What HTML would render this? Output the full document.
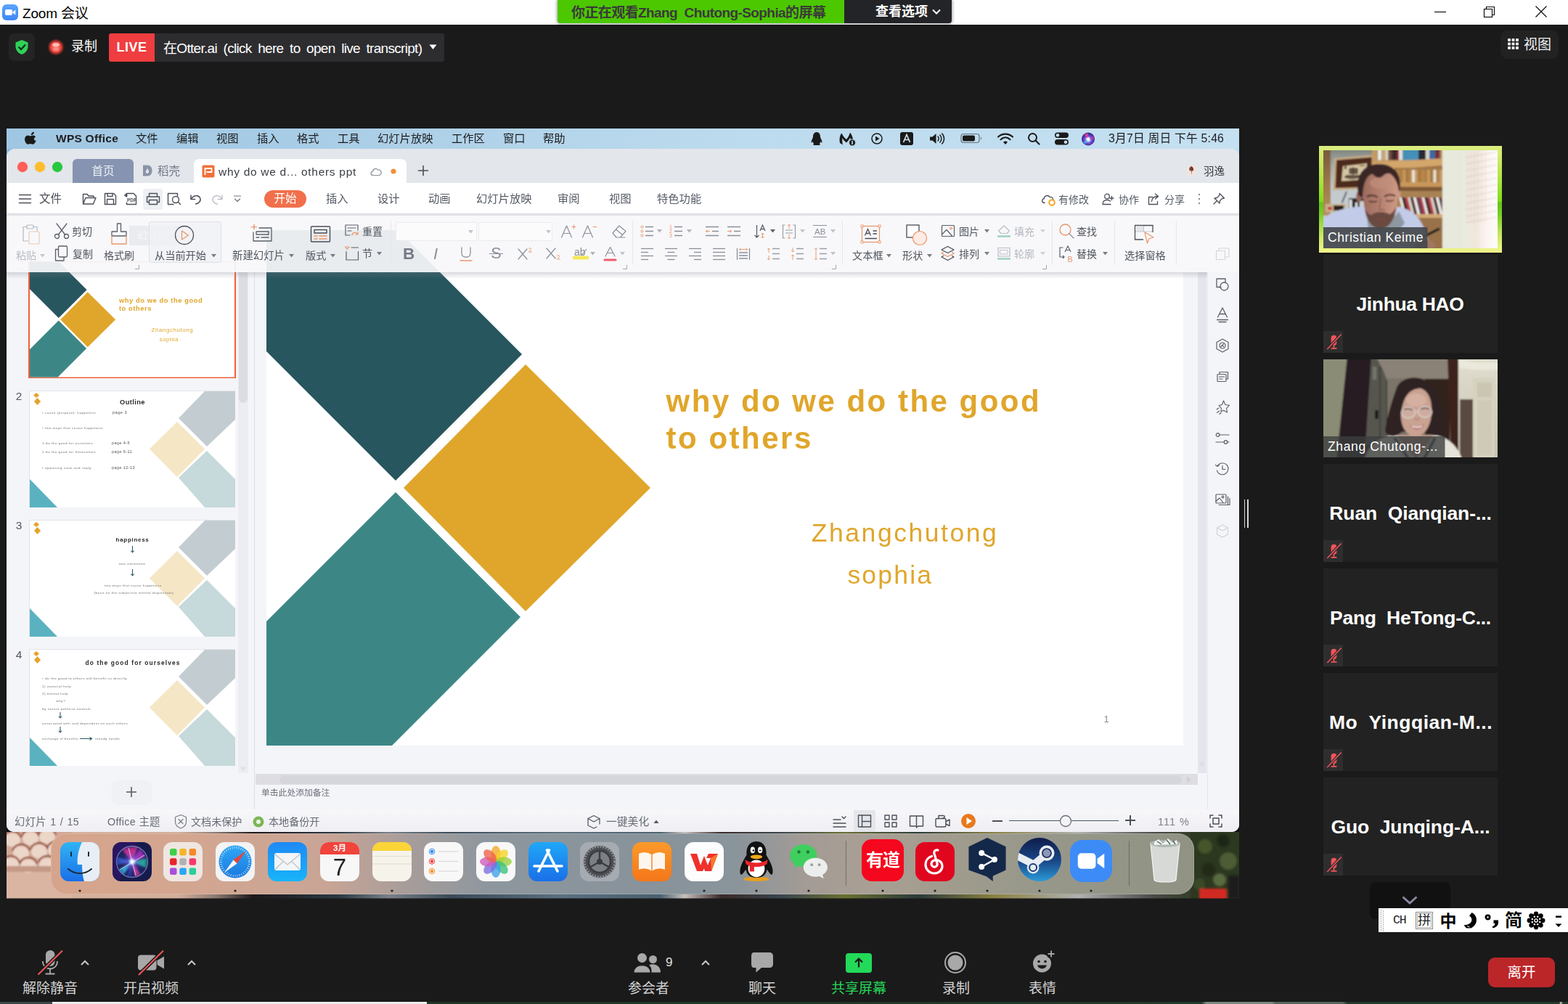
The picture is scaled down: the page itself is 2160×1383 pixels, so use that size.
<!DOCTYPE html><html><head><meta charset="utf-8"><title>Zoom</title><style>
html,body{margin:0;padding:0;}
body{width:2160px;height:1383px;overflow:hidden;background:#1a1a1a;font-family:"Liberation Sans","Noto Sans CJK SC",sans-serif;position:relative;}
.b{position:absolute;display:block;}
.t{position:absolute;white-space:pre;line-height:1;}
.bold{font-weight:700;}
</style></head><body><div class="b" style="left:0px;top:0px;width:2160px;height:34px;background:#ffffff;"></div><svg class="b" style="left:3px;top:6px;" width="22" height="22" viewBox="0 0 22 22"><defs><linearGradient id="zg" x1="0" y1="0" x2="0" y2="1"><stop offset="0" stop-color="#5ba4ff"/><stop offset="1" stop-color="#3f86f6"/></linearGradient></defs><rect x="0" y="0" width="22" height="22" rx="6" fill="url(#zg)"/><rect x="4" y="7" width="10" height="8" rx="2" fill="#fff"/><path d="M14.5 10.2 L18.3 7.6 V14.4 L14.5 11.8Z" fill="#fff"/></svg><div class="t " style="left:31px;top:17.5px;font-size:19px;color:#000;transform:translate(0,-50%);letter-spacing:-0.169px;">Zoom 会议</div><div class="b" style="left:766px;top:0px;width:547px;height:34px;background:rgba(0,0,0,0.25);border-radius:0 0 6px 6px;filter:blur(1.5px);"></div><div class="b" style="left:768px;top:0px;width:395px;height:32px;background:#4cc800;border-radius:0 0 0 4px;"></div><div class="b" style="left:1163px;top:0px;width:148px;height:32px;background:#232427;border-radius:0 0 4px 0;"></div><div class="t bold" style="left:787px;top:16.5px;font-size:19px;color:#3a3a3a;transform:translate(0,-50%);font-weight:700;letter-spacing:-0.586px;">你正在观看Zhang  Chutong-Sophia的屏幕</div><div class="t bold" style="left:1206px;top:16px;font-size:18px;color:#fff;transform:translate(0,-50%);font-weight:700;">查看选项</div><svg class="b" style="left:1283px;top:11px;" width="14" height="10" viewBox="0 0 14 10"><path d="M2 2.5 L7 7.5 L12 2.5" stroke="#fff" stroke-width="2" fill="none"/></svg><svg class="b" style="left:1970px;top:6px;" width="170" height="22" viewBox="0 0 170 22"><path d="M6 10.5 H22" stroke="#111" stroke-width="1.2"/><rect x="74.5" y="6.5" width="11" height="11" fill="none" stroke="#111" stroke-width="1.2"/><path d="M77.5 6.5 V3.5 H88.5 V14.5 H85.5" fill="none" stroke="#111" stroke-width="1.2"/><path d="M145.5 2.5 L160.5 17.5 M160.5 2.5 L145.5 17.5" stroke="#111" stroke-width="1.3"/></svg><div class="b" style="left:12px;top:46px;width:36px;height:38px;background:#242424;border-radius:8px;"></div><svg class="b" style="left:20px;top:54px;" width="20" height="22" viewBox="0 0 20 22"><path d="M10 1 L18.5 4.5 V10 C18.5 15.5 14.5 19.5 10 21 C5.500 19.5 1.500 15.500 1.500 10 V4.500Z" fill="#2fd158"/><path d="M5.500 10.500 L9 14 L15 7.500" stroke="#14301c" stroke-width="2.300" fill="none"/></svg><svg class="b" style="left:64px;top:52px;" width="26" height="26" viewBox="0 0 26 26"><defs><radialGradient id="rg"><stop offset="0" stop-color="#ff9a8a"/><stop offset="0.55" stop-color="#f0463c"/><stop offset="0.8" stop-color="#8a2a25" stop-opacity="0.7"/><stop offset="1" stop-color="#1a1a1a" stop-opacity="0"/></radialGradient></defs><circle cx="13" cy="13" r="12.500" fill="url(#rg)"/><ellipse cx="13" cy="9.500" rx="5" ry="2.500" fill="#ffd8d0" fill-opacity="0.75"/><ellipse cx="13" cy="16.500" rx="4.500" ry="2" fill="#ffc0b8" fill-opacity="0.35"/></svg><div class="t " style="left:98px;top:64px;font-size:18px;color:#fff;transform:translate(0,-50%);">录制</div><div class="b" style="left:150px;top:46px;width:63px;height:39px;background:#ef3d40;border-radius:3px 0 0 3px;"></div><div class="t " style="left:181.5px;top:65px;font-size:18px;color:#fff;transform:translate(-50%,-50%);font-weight:700;letter-spacing:0.5px;">LIVE</div><div class="b" style="left:213px;top:46px;width:399px;height:39px;background:#2d2d30;border-radius:0 3px 3px 0;"></div><div class="t " style="left:225px;top:65.5px;font-size:19px;color:#fff;transform:translate(0,-50%);letter-spacing:-0.696px;word-spacing:4px;">在Otter.ai (click here to open live transcript)</div><svg class="b" style="left:591px;top:61px;" width="11" height="8" viewBox="0 0 11 8"><path d="M0.500 0.500 H10.5 L5.500 7Z" fill="#fff"/></svg><div class="b" style="left:2067px;top:42px;width:80px;height:39px;background:#222222;border-radius:10px;"></div><svg class="b" style="left:2077px;top:53px;" width="16" height="16" viewBox="0 0 16 16"><rect x="0" y="0" width="4" height="4" rx="1" fill="#e8e8e8"/><rect x="0" y="5.5" width="4" height="4" rx="1" fill="#e8e8e8"/><rect x="0" y="11" width="4" height="4" rx="1" fill="#e8e8e8"/><rect x="5.5" y="0" width="4" height="4" rx="1" fill="#e8e8e8"/><rect x="5.5" y="5.5" width="4" height="4" rx="1" fill="#e8e8e8"/><rect x="5.5" y="11" width="4" height="4" rx="1" fill="#e8e8e8"/><rect x="11" y="0" width="4" height="4" rx="1" fill="#e8e8e8"/><rect x="11" y="5.5" width="4" height="4" rx="1" fill="#e8e8e8"/><rect x="11" y="11" width="4" height="4" rx="1" fill="#e8e8e8"/></svg><div class="t " style="left:2099px;top:60.5px;font-size:19px;color:#f0f0f0;transform:translate(0,-50%);">视图</div><div style="position:absolute;left:0;top:0;width:2160px;height:1383px;filter:blur(0.4px);clip-path:inset(177px 453px 145.500px 9px);"><div class="b" style="left:9px;top:177px;width:1698px;height:1060.5px;background:#111;"></div><div class="b" style="left:9px;top:177px;width:1698px;height:29px;background:linear-gradient(90deg,#9fc6e2 0%,#a9cde6 25%,#bddbee 60%,#c4e0f1 100%);"></div><svg class="b" style="left:34px;top:182px;" width="17" height="19" viewBox="0 0 17 19"><path d="M11.6 4.2c.8-1 1.300-2.200 1.200-3.500-1.100.1-2.500.8-3.300 1.800-.7.8-1.400 2.100-1.200 3.300 1.300.1 2.500-.6 3.300-1.600zM15.600 13.700c-.5 1.100-.7 1.600-1.300 2.500-.9 1.300-2.100 3-3.600 3-1.300 0-1.700-.9-3.500-.9s-2.200.9-3.500.9c-1.500 0-2.700-1.500-3.500-2.900C-2.200 12.500-.6 6.600 3.600 6.400c1.400 0 2.500 1 3.400 1 .8 0 2.400-1.200 4-1 .700 0 2.600.3 3.800 2.100-3.300 1.900-2.800 6.200.8 5.200z" fill="#1a1a1a" transform="translate(1,-1.500) scale(0.95)"/></svg><div class="t " style="left:77px;top:191px;font-size:15.5px;color:#1d1d1f;transform:translate(0,-50%);font-weight:700;letter-spacing:0.246px;">WPS Office</div><div class="t semi" style="left:187px;top:191px;font-size:15.3px;color:#1d1d1f;transform:translate(0,-50%);">文件</div><div class="t semi" style="left:243px;top:191px;font-size:15.3px;color:#1d1d1f;transform:translate(0,-50%);">编辑</div><div class="t semi" style="left:298px;top:191px;font-size:15.3px;color:#1d1d1f;transform:translate(0,-50%);">视图</div><div class="t semi" style="left:354px;top:191px;font-size:15.3px;color:#1d1d1f;transform:translate(0,-50%);">插入</div><div class="t semi" style="left:409px;top:191px;font-size:15.3px;color:#1d1d1f;transform:translate(0,-50%);">格式</div><div class="t semi" style="left:465px;top:191px;font-size:15.3px;color:#1d1d1f;transform:translate(0,-50%);">工具</div><div class="t semi" style="left:520px;top:191px;font-size:15.3px;color:#1d1d1f;transform:translate(0,-50%);">幻灯片放映</div><div class="t semi" style="left:622px;top:191px;font-size:15.3px;color:#1d1d1f;transform:translate(0,-50%);">工作区</div><div class="t semi" style="left:693px;top:191px;font-size:15.3px;color:#1d1d1f;transform:translate(0,-50%);">窗口</div><div class="t semi" style="left:748px;top:191px;font-size:15.3px;color:#1d1d1f;transform:translate(0,-50%);">帮助</div><svg class="b" style="left:1116px;top:181px;" width="18" height="20" viewBox="0 0 18 20"><path d="M9 1C5.500 1 4 4 4 7.500 C4 9 2 11.500 1.500 14.500 C1.300 16 2.500 15.500 3.500 14 C3.800 15.500 4.500 16.500 5.500 17.300 C4 17.800 3.500 19 5.500 19 H12.500 C14.500 19 14 17.800 12.500 17.300 C13.500 16.500 14.200 15.500 14.500 14 C15.500 15.500 16.700 16 16.500 14.500 C16 11.500 14 9 14 7.500 C14 4 12.500 1 9 1Z" fill="#1a1a1a"/></svg><svg class="b" style="left:1155px;top:181px;" width="26" height="21" viewBox="0 0 26 21"><path d="M2 16 C1 10 2 5 4.500 2.500 C6 6 8 9 11 11 C13.500 8 15 5 16 1.500 C19 5 20.500 10 20 15 L17 18 C17.500 14 17 10.500 16 8.500 C14.500 11.500 13 13.500 11 15.500 C8.500 13.500 6.500 11.500 5.500 9 C5 12 5.200 15 6 18.500Z" fill="#1a1a1a"/><circle cx="19" cy="15.500" r="4.500" fill="#1a1a1a" stroke="#b5d6eb" stroke-width="1"/><rect x="18.300" y="13" width="1.500" height="5" fill="#cfe4f2"/></svg><svg class="b" style="left:1199px;top:182px;" width="18" height="18" viewBox="0 0 18 18"><circle cx="9" cy="9" r="7" fill="none" stroke="#1a1a1a" stroke-width="1.500"/><path d="M7 5.500 L12.500 9 L7 12.500Z" fill="#1a1a1a"/></svg><svg class="b" style="left:1239px;top:181px;" width="20" height="20" viewBox="0 0 20 20"><rect x="1" y="1" width="18" height="18" rx="3" fill="#1a1a1a"/><path d="M5.500 15 L10 4.500 L14.500 15 M7.200 11.500 H12.800" stroke="#d5e8f4" stroke-width="1.600" fill="none"/></svg><svg class="b" style="left:1280px;top:181px;" width="26" height="20" viewBox="0 0 26 20"><path d="M1 7.500 H4.500 L9.500 3 V17 L4.500 12.500 H1Z" fill="#1a1a1a"/><path d="M12 7 C13.500 8.500 13.500 11.500 12 13 M14.800 5 C17.500 7.500 17.500 12.500 14.800 15 M17.600 3 C21.500 6.500 21.500 13.500 17.600 17" stroke="#1a1a1a" stroke-width="1.500" fill="none" stroke-linecap="round"/></svg><svg class="b" style="left:1323px;top:183px;" width="32" height="16" viewBox="0 0 32 16"><rect x="1" y="1.500" width="25" height="12" rx="3.500" fill="none" stroke="#1a1a1a" stroke-opacity="0.55" stroke-width="1.200"/><rect x="3" y="3.500" width="17" height="8" rx="2" fill="#1a1a1a"/><path d="M28 5.500 C29.500 6 29.500 9 28 9.500Z" fill="#1a1a1a" fill-opacity="0.5"/></svg><svg class="b" style="left:1373px;top:182px;" width="24" height="18" viewBox="0 0 24 18"><path d="M2 6.500 C7.500 1.200 16.500 1.200 22 6.500" stroke="#1a1a1a" stroke-width="2.200" fill="none" stroke-linecap="round"/><path d="M5.500 10.200 C9.500 6.500 14.500 6.500 18.500 10.200" stroke="#1a1a1a" stroke-width="2.200" fill="none" stroke-linecap="round"/><path d="M9 13.700 C11 12 13 12 15 13.700 L12 17Z" fill="#1a1a1a"/></svg><svg class="b" style="left:1415px;top:182px;" width="18" height="18" viewBox="0 0 18 18"><circle cx="7.500" cy="7.500" r="5.500" fill="none" stroke="#1a1a1a" stroke-width="2"/><path d="M11.500 11.500 L16.500 16.500" stroke="#1a1a1a" stroke-width="2.200" stroke-linecap="round"/></svg><svg class="b" style="left:1452px;top:182px;" width="22" height="18" viewBox="0 0 22 18"><rect x="1" y="0.500" width="19" height="7.500" rx="3.700" fill="#1a1a1a"/><circle cx="5" cy="4.200" r="2.300" fill="#c5dff0"/><rect x="1" y="10" width="19" height="7.500" rx="3.700" fill="#1a1a1a"/><circle cx="16" cy="13.800" r="2.300" fill="#c5dff0"/></svg><svg class="b" style="left:1489px;top:181px;" width="20" height="21" viewBox="0 0 20 21"><defs><radialGradient id="siri" cx="0.5" cy="0.55" r="0.6"><stop offset="0" stop-color="#ffffff"/><stop offset="0.18" stop-color="#bfe4ff"/><stop offset="0.45" stop-color="#7a4ad8"/><stop offset="0.8" stop-color="#3a2a90"/><stop offset="1" stop-color="#23245e"/></radialGradient></defs><circle cx="10" cy="10.500" r="9" fill="url(#siri)"/><path d="M10 10.500 L4 4 L10 2.500Z" fill="#e0409a" opacity="0.85"/><path d="M10 10.500 L17.500 6 L18 11Z" fill="#c040b0" opacity="0.7"/><path d="M10 10.500 L3 15 L6 17.500Z" fill="#30c0f0" opacity="0.8"/><circle cx="10" cy="10.500" r="2.200" fill="#fff" opacity="0.9"/></svg><div class="t semi" style="left:1527px;top:191.3px;font-size:15.8px;color:#1d1d1f;transform:translate(0,-50%);letter-spacing:0.189px;">3月7日 周日 下午 5:46</div><div class="b" style="left:9px;top:205px;width:1698px;height:20px;background:linear-gradient(90deg,#8fbad8 0%,#a9cde6 25%,#bddbee 60%,#c4e0f1 100%);"></div><div class="b" style="left:9px;top:205px;width:1698px;height:941px;background:#f4f5f9;border-radius:12px 12px 10px 10px;"></div><div class="b" style="left:9px;top:205px;width:1698px;height:47.5px;background:#e3e6ea;border-radius:12px 12px 0 0;"></div><svg class="b" style="left:22px;top:221px;" width="70" height="18" viewBox="0 0 70 18"><circle cx="9" cy="9" r="7.200" fill="#fe5f57"/><circle cx="33" cy="9" r="7.200" fill="#febc2e"/><circle cx="57" cy="9" r="7.200" fill="#28c840"/></svg><div class="b" style="left:100px;top:218.5px;width:84px;height:33.5px;background:#8694b1;border-radius:6px 6px 0 0;"></div><div class="t " style="left:142px;top:236px;font-size:15.5px;color:#eef1f6;transform:translate(-50%,-50%);">首页</div><svg class="b" style="left:195px;top:226px;" width="16" height="18" viewBox="0 0 16 18"><path d="M2 1.500 H7.500 C12.500 1.500 14.500 5 14.500 9 C14.500 13 12.500 16.500 7.500 16.500 H2Z" fill="#8b93a8"/><path d="M6.500 12.500 C5 10.500 6.500 8 8.500 6 C8.500 8 10.500 8.500 10 11 C9.700 12.500 7.500 13.500 6.500 12.500Z" fill="#e3e6ea"/></svg><div class="t semi" style="left:217px;top:236px;font-size:15.5px;color:#70778a;transform:translate(0,-50%);">稻壳</div><div class="b" style="left:267px;top:219px;width:293px;height:34px;background:#ffffff;border-radius:7px 7px 0 0;"></div><svg class="b" style="left:278px;top:227px;" width="18" height="18" viewBox="0 0 18 18"><rect x="0.500" y="0.500" width="17" height="17" rx="2" fill="#f0713a"/><path d="M4.500 14 V5 H13.500 V10 H6.500" fill="none" stroke="#fff" stroke-width="1.800"/></svg><div class="t " style="left:301px;top:236.5px;font-size:15.5px;color:#3a3d44;transform:translate(0,-50%);letter-spacing:0.707px;">why do we d... others ppt</div><svg class="b" style="left:509px;top:229px;" width="20" height="14" viewBox="0 0 20 14"><g fill="none" stroke="#8a8f99" stroke-width="1.2" stroke-linecap="round" stroke-linejoin="round"><path d="M5 12.500 C1.500 12.500 1 8 4.500 7.200 C4.800 3.500 9.500 2 11.500 5 C15 4.200 17.500 8 15.500 10.800 C15 12 14 12.500 13 12.500Z"/></g></svg><svg class="b" style="left:537px;top:231px;" width="10" height="10" viewBox="0 0 10 10"><circle cx="5" cy="5" r="3.600" fill="#f0913a"/></svg><svg class="b" style="left:575px;top:227px;" width="16" height="16" viewBox="0 0 16 16"><g fill="none" stroke="#4a4e57" stroke-width="1.6" stroke-linecap="round" stroke-linejoin="round"><path d="M8 1.500 V14.500 M1.500 8 H14.500"/></g></svg><svg class="b" style="left:1633px;top:226px;" width="16" height="18" viewBox="0 0 16 18"><circle cx="8" cy="9" r="7.500" fill="#f0e4dc"/><path d="M8 3 C5 4.500 4.500 8 6.500 9.500 L8 9 V15 L9 9 L10.500 9.500 C12 7.500 11 4 8 3Z" fill="#7a3b2e"/></svg><div class="t semi" style="left:1658px;top:236px;font-size:14.5px;color:#3a3d44;transform:translate(0,-50%);">羽逸</div><div class="b" style="left:9px;top:252px;width:1698px;height:42px;background:#ffffff;"></div><svg class="b" style="left:25px;top:266px;" width="20" height="16" viewBox="0 0 20 16"><g fill="none" stroke="#4b4f58" stroke-width="1.5" stroke-linecap="round" stroke-linejoin="round"><path d="M1.500 2.500 H17.500 M1.500 8 H17.500 M1.500 13.500 H17.500"/></g></svg><div class="t " style="left:54px;top:274px;font-size:15.5px;color:#4b4f58;transform:translate(0,-50%);">文件</div><svg class="b" style="left:112px;top:264px;" width="22" height="20" viewBox="0 0 22 20"><g fill="none" stroke="#4b4f58" stroke-width="1.4" stroke-linecap="round" stroke-linejoin="round"><path d="M2.500 17 V3.500 H8 L10 6 H17 V8.500 M2.500 17 L6 8.500 H20 L16.500 17Z"/></g></svg><svg class="b" style="left:142px;top:264px;" width="20" height="20" viewBox="0 0 20 20"><g fill="none" stroke="#4b4f58" stroke-width="1.4" stroke-linecap="round" stroke-linejoin="round"><path d="M2.500 2.500 H14.500 L17.500 5.500 V17.500 H2.500Z M5.500 17.500 V10.500 H14.500 V17.500 M6 2.500 V6.500 H13 V2.500"/></g></svg><svg class="b" style="left:170px;top:264px;" width="22" height="20" viewBox="0 0 22 20"><g fill="none" stroke="#4b4f58" stroke-width="1.4" stroke-linecap="round" stroke-linejoin="round"><path d="M4.500 7 V2.500 H14 L17.500 6 V17.500 H4.500 V15"/><path d="M1.500 5 H5 M3.300 3.300 V6.700"/></g></svg><div class="t " style="left:181.5px;top:276px;font-size:6.5px;color:#4b4f58;transform:translate(-50%,-50%);font-weight:700;">PDF</div><div class="b" style="left:197px;top:260px;width:27px;height:29px;background:#eef0f4;border-radius:3px;"></div><svg class="b" style="left:200px;top:264px;" width="22" height="20" viewBox="0 0 22 20"><g fill="none" stroke="#4b4f58" stroke-width="1.4" stroke-linecap="round" stroke-linejoin="round"><path d="M5.500 7 V2.500 H16.500 V7 M5.500 14.500 H2.500 V7 H19.500 V14.500 H16.500 M5.500 11.500 H16.500 V17.500 H5.500Z"/></g></svg><svg class="b" style="left:229px;top:264px;" width="22" height="20" viewBox="0 0 22 20"><g fill="none" stroke="#4b4f58" stroke-width="1.4" stroke-linecap="round" stroke-linejoin="round"><path d="M10 17.500 H2.500 V2.500 H15.500 V6"/><circle cx="13" cy="11" r="4.500"/><path d="M16.300 14.300 L19.500 17.500"/></g></svg><svg class="b" style="left:260px;top:264px;" width="20" height="20" viewBox="0 0 20 20"><g fill="none" stroke="#4b4f58" stroke-width="1.5" stroke-linecap="round" stroke-linejoin="round"><path d="M3 5 V10.500 H8.500"/><path d="M3.500 10 C6 5 13 4 15.500 8.500 C17.500 12.500 14 16.500 9.500 17"/></g></svg><svg class="b" style="left:289px;top:264px;" width="20" height="20" viewBox="0 0 20 20"><g fill="none" stroke="#b9bcc4" stroke-width="1.3" stroke-linecap="round" stroke-linejoin="round"><path d="M17 5 V10.500 H11.500"/><path d="M16.500 10 C14 5 7 4 4.500 8.500 C2.500 12.500 6 16.500 10.500 17"/></g></svg><svg class="b" style="left:320px;top:267px;" width="14" height="14" viewBox="0 0 14 14"><g fill="none" stroke="#6f747f" stroke-width="1.2" stroke-linecap="round" stroke-linejoin="round"><path d="M2.500 3 H11.500 M3.500 7 L7 10.500 L10.500 7"/></g></svg><div class="b" style="left:364px;top:262px;width:58px;height:24px;background:#f1704b;border-radius:12px;"></div><div class="t " style="left:393px;top:274px;font-size:15.5px;color:#fff;transform:translate(-50%,-50%);">开始</div><div class="t " style="left:449px;top:274px;font-size:15.3px;color:#555b66;transform:translate(0,-50%);">插入</div><div class="t " style="left:520px;top:274px;font-size:15.3px;color:#555b66;transform:translate(0,-50%);">设计</div><div class="t " style="left:590px;top:274px;font-size:15.3px;color:#555b66;transform:translate(0,-50%);">动画</div><div class="t " style="left:656px;top:274px;font-size:15.3px;color:#555b66;transform:translate(0,-50%);">幻灯片放映</div><div class="t " style="left:768px;top:274px;font-size:15.3px;color:#555b66;transform:translate(0,-50%);">审阅</div><div class="t " style="left:839px;top:274px;font-size:15.3px;color:#555b66;transform:translate(0,-50%);">视图</div><div class="t " style="left:905px;top:274px;font-size:15.3px;color:#555b66;transform:translate(0,-50%);">特色功能</div><svg class="b" style="left:1433px;top:264px;" width="22" height="20" viewBox="0 0 22 20"><g fill="none" stroke="#4b4f58" stroke-width="1.3" stroke-linecap="round" stroke-linejoin="round"><path d="M6 15.500 C2 15.500 1.500 10.500 5.200 9.600 C5.500 5.500 11 4 13 7.500 C16.500 6.500 19 10.500 17 13"/></g></svg><svg class="b" style="left:1443px;top:273px;" width="12" height="12" viewBox="0 0 12 12"><circle cx="6" cy="6" r="3.800" fill="#fff" stroke="#f5a623" stroke-width="2"/></svg><div class="t " style="left:1458px;top:275px;font-size:14px;color:#555b66;transform:translate(0,-50%);">有修改</div><svg class="b" style="left:1517px;top:265px;" width="20" height="18" viewBox="0 0 20 18"><g fill="none" stroke="#4b4f58" stroke-width="1.3" stroke-linecap="round" stroke-linejoin="round"><circle cx="8" cy="5.500" r="3.300"/><path d="M2 16.500 C2 12 5 10.500 8 10.500 C10 10.500 11.500 11 12.500 12 M14.500 5.500 V10.500 M12 8 H17 M2 16.500 H13"/></g></svg><div class="t " style="left:1541px;top:275px;font-size:14px;color:#555b66;transform:translate(0,-50%);">协作</div><svg class="b" style="left:1580px;top:265px;" width="20" height="18" viewBox="0 0 20 18"><g fill="none" stroke="#4b4f58" stroke-width="1.3" stroke-linecap="round" stroke-linejoin="round"><path d="M8 6.500 H2.500 V16.500 H14.500 V12.500"/><path d="M6.500 12.500 C7 8 10 5.500 14.500 5.500 M11.500 2 L15.500 5.500 L11.500 9"/></g></svg><div class="t " style="left:1604px;top:275px;font-size:14px;color:#555b66;transform:translate(0,-50%);">分享</div><svg class="b" style="left:1649px;top:265px;" width="6" height="18" viewBox="0 0 6 18"><circle cx="3" cy="3" r="1.200" fill="#8a8f99"/><circle cx="3" cy="9" r="1.200" fill="#8a8f99"/><circle cx="3" cy="15" r="1.200" fill="#8a8f99"/></svg><svg class="b" style="left:1669px;top:264px;" width="20" height="20" viewBox="0 0 20 20"><g fill="none" stroke="#4b4f58" stroke-width="1.3" stroke-linecap="round" stroke-linejoin="round"><path d="M11 2.500 L17.500 9 L14.500 9.500 L11.500 12.500 L11 16 L4 9 L7.500 8.500 L10.500 5.500Z M7.500 12.500 L3 17"/></g></svg><div class="b" style="left:9px;top:292.5px;width:1698px;height:5px;background:linear-gradient(#f6f6f8,#dadbe1 55%,#f0f1f4);"></div><div class="b" style="left:9px;top:375px;width:1698px;height:740px;background:#f4f5f9;"></div><svg class="b" style="left:367px;top:317px;" width="1263" height="710" viewBox="0 0 1263 710"><g id="s1"><rect x="0" y="0" width="1263" height="710" fill="#fff"/><polygon points="0,0 181,0 352,171 178,345 0,167" fill="#27565f" /><polygon points="189,355 357,185 529,355 357,525" fill="#e0a62b" /><polygon points="178,361 350,533 173,710 0,710 0,539" fill="#3c8786" /><g font-family="Liberation Sans" fill="#e0a62b"><text x="550.600" y="250.200" font-size="42" font-weight="700" textLength="514" lengthAdjust="spacing">why do we do the good</text><text x="550.600" y="301" font-size="42" font-weight="700" textLength="199.700" lengthAdjust="spacing">to others</text><text x="750.800" y="429.200" font-size="35.500" textLength="255" lengthAdjust="spacing">Zhangchutong</text><text x="800.400" y="486.500" font-size="35.500" textLength="115.700" lengthAdjust="spacing">sophia</text></g><text x="1157" y="677.500" font-size="13" fill="#8a8a8a" text-anchor="middle" font-family="Liberation Sans">1</text></g></svg><div class="b" style="left:39px;top:360px;width:286px;height:161px;background:#f0603a;"></div><svg class="b" style="left:41px;top:361px;" width="282" height="158.5" viewBox="0 0 1263 710"><rect x="0" y="0" width="1263" height="710" fill="#fff"/><polygon points="0,0 181,0 352,171 178,345 0,167" fill="#27565f" /><polygon points="189,355 357,185 529,355 357,525" fill="#e0a62b" /><polygon points="178,361 350,533 173,710 0,710 0,539" fill="#3c8786" /><g font-family="Liberation Sans" fill="#e0a62b"><text x="550.600" y="250.200" font-size="42" font-weight="700" textLength="514" lengthAdjust="spacing">why do we do the good</text><text x="550.600" y="301" font-size="42" font-weight="700" textLength="199.700" lengthAdjust="spacing">to others</text><text x="750.800" y="429.200" font-size="35.500" textLength="255" lengthAdjust="spacing">Zhangchutong</text><text x="800.400" y="486.500" font-size="35.500" textLength="115.700" lengthAdjust="spacing">sophia</text></g><text x="1157" y="677.500" font-size="0" fill="#8a8a8a" text-anchor="middle" font-family="Liberation Sans">1</text></svg><div class="b" style="left:39.5px;top:537.5px;width:284px;height:161px;background:#e3e4e9;"></div><svg class="b" style="left:40.5px;top:538.5px;" width="283" height="160" viewBox="0 0 283 160"><rect x="0" y="0" width="283" height="160" fill="#fff"/><polygon points="241,0 283,0 283,39 244,76 205,37" fill="#c3cdd1" /><polygon points="165,79.5 203,42 241,79.5 203,118" fill="#f5e6c5" /><polygon points="244,82 283,121 283,160 241,160 205,119" fill="#c6d9db" /><polygon points="0,121 0,160 38,160" fill="#5ab2c0" /><polygon points="5,5.5 9,2 13,5.5 9,9" fill="#e5a32a" /><polygon points="6,14 10.5,9 15,14 10.5,19" fill="#e5a32a" /><text x="141.5" y="18" font-size="9.3" fill="#2a2a2a" text-anchor="middle" font-weight="700" letter-spacing="0.4" font-family="Liberation Sans">Outline</text><text x="17" y="31" font-size="3.6" fill="#777" text-anchor="start" font-weight="400" letter-spacing="0.3" font-family="Liberation Sans" textLength="74" lengthAdjust="spacingAndGlyphs">•  cause (purpose): happiness</text><text x="114" y="31" font-size="4.5" fill="#555" text-anchor="start" font-weight="400" letter-spacing="0.3" font-family="Liberation Sans" textLength="20" lengthAdjust="spacingAndGlyphs">page 3</text><text x="17" y="51.5" font-size="3.6" fill="#777" text-anchor="start" font-weight="400" letter-spacing="0.3" font-family="Liberation Sans" textLength="84" lengthAdjust="spacingAndGlyphs">•  two ways that cause happiness</text><text x="17" y="73" font-size="3.6" fill="#777" text-anchor="start" font-weight="400" letter-spacing="0.3" font-family="Liberation Sans" textLength="70" lengthAdjust="spacingAndGlyphs">1.do the good for ourselves</text><text x="113" y="73" font-size="4.5" fill="#555" text-anchor="start" font-weight="400" letter-spacing="0.3" font-family="Liberation Sans" textLength="25" lengthAdjust="spacingAndGlyphs">page 4-5</text><text x="17" y="84.5" font-size="3.6" fill="#777" text-anchor="start" font-weight="400" letter-spacing="0.3" font-family="Liberation Sans" textLength="74" lengthAdjust="spacingAndGlyphs">2.do the good for themselves</text><text x="113" y="84.5" font-size="4.5" fill="#555" text-anchor="start" font-weight="400" letter-spacing="0.3" font-family="Liberation Sans" textLength="28" lengthAdjust="spacingAndGlyphs">page 6-11</text><text x="17" y="107" font-size="3.6" fill="#777" text-anchor="start" font-weight="400" letter-spacing="0.3" font-family="Liberation Sans" textLength="68" lengthAdjust="spacingAndGlyphs">•  opposing view and reply</text><text x="113" y="107" font-size="4.5" fill="#555" text-anchor="start" font-weight="400" letter-spacing="0.3" font-family="Liberation Sans" textLength="32" lengthAdjust="spacingAndGlyphs">page 12-13</text></svg><div class="t " style="left:26px;top:546px;font-size:15.5px;color:#50555f;transform:translate(-50%,-50%);">2</div><div class="b" style="left:39.5px;top:715.5px;width:284px;height:161px;background:#e3e4e9;"></div><svg class="b" style="left:40.5px;top:716.5px;" width="283" height="160" viewBox="0 0 283 160"><rect x="0" y="0" width="283" height="160" fill="#fff"/><polygon points="241,0 283,0 283,39 244,76 205,37" fill="#c3cdd1" /><polygon points="165,79.5 203,42 241,79.5 203,118" fill="#f5e6c5" /><polygon points="244,82 283,121 283,160 241,160 205,119" fill="#c6d9db" /><polygon points="0,121 0,160 38,160" fill="#5ab2c0" /><polygon points="5,5.5 9,2 13,5.5 9,9" fill="#e5a32a" /><polygon points="6,14 10.5,9 15,14 10.5,19" fill="#e5a32a" /><text x="141.5" y="29" font-size="8" fill="#2a2a2a" text-anchor="middle" font-weight="700" letter-spacing="0.7" font-family="Liberation Sans">happiness</text><path d="M141.5 35 V44 M139.3 41.5 L141.5 44 L143.7 41.5" stroke="#2f5a68" stroke-width="1.100" fill="none"/><text x="122.5" y="60.5" font-size="3.6" fill="#777" text-anchor="start" font-weight="400" letter-spacing="0.3" font-family="Liberation Sans" textLength="37" lengthAdjust="spacingAndGlyphs">two emotions</text><path d="M141.5 67 V76 M139.3 73.5 L141.5 76 L143.7 73.5" stroke="#2f5a68" stroke-width="1.100" fill="none"/><text x="103" y="91" font-size="3.6" fill="#777" text-anchor="start" font-weight="400" letter-spacing="0.3" font-family="Liberation Sans" textLength="78.5" lengthAdjust="spacingAndGlyphs">two ways that cause happiness</text><text x="88.5" y="101" font-size="3.6" fill="#777" text-anchor="start" font-weight="400" letter-spacing="0.3" font-family="Liberation Sans" textLength="110" lengthAdjust="spacingAndGlyphs">(base on the subjective mental disposition)</text></svg><div class="t " style="left:26px;top:724px;font-size:15.5px;color:#50555f;transform:translate(-50%,-50%);">3</div><div class="b" style="left:39.5px;top:893.5px;width:284px;height:161px;background:#e3e4e9;"></div><svg class="b" style="left:40.5px;top:894.5px;" width="283" height="160" viewBox="0 0 283 160"><rect x="0" y="0" width="283" height="160" fill="#fff"/><polygon points="241,0 283,0 283,39 244,76 205,37" fill="#c3cdd1" /><polygon points="165,79.5 203,42 241,79.5 203,118" fill="#f5e6c5" /><polygon points="244,82 283,121 283,160 241,160 205,119" fill="#c6d9db" /><polygon points="0,121 0,160 38,160" fill="#5ab2c0" /><polygon points="5,5.5 9,2 13,5.5 9,9" fill="#e5a32a" /><polygon points="6,14 10.5,9 15,14 10.5,19" fill="#e5a32a" /><text x="76.5" y="21" font-size="8.4" fill="#2a2a2a" text-anchor="start" font-weight="700" letter-spacing="0" font-family="Liberation Sans" textLength="130" lengthAdjust="spacing">do the good for ourselves</text><text x="17" y="41" font-size="3.6" fill="#777" text-anchor="start" font-weight="400" letter-spacing="0.3" font-family="Liberation Sans" textLength="117" lengthAdjust="spacingAndGlyphs">•  do the good to others will benefit us directly</text><text x="17" y="51.5" font-size="3.6" fill="#777" text-anchor="start" font-weight="400" letter-spacing="0.3" font-family="Liberation Sans" textLength="40" lengthAdjust="spacingAndGlyphs">1) material help</text><text x="17" y="61.5" font-size="3.6" fill="#777" text-anchor="start" font-weight="400" letter-spacing="0.3" font-family="Liberation Sans" textLength="36" lengthAdjust="spacingAndGlyphs">2) mental help</text><text x="36" y="72" font-size="3.6" fill="#777" text-anchor="start" font-weight="400" letter-spacing="0.3" font-family="Liberation Sans" textLength="13" lengthAdjust="spacingAndGlyphs">why?</text><text x="17" y="82.5" font-size="3.6" fill="#777" text-anchor="start" font-weight="400" letter-spacing="0.3" font-family="Liberation Sans" textLength="67" lengthAdjust="spacingAndGlyphs">by nature political animals</text><path d="M42 86 V94 M39.8 91.5 L42 94 L44.2 91.5" stroke="#2f5a68" stroke-width="1.100" fill="none"/><text x="17" y="103" font-size="3.6" fill="#777" text-anchor="start" font-weight="400" letter-spacing="0.3" font-family="Liberation Sans" textLength="118" lengthAdjust="spacingAndGlyphs">associated with and dependent on each others</text><path d="M42 106 V114 M39.8 111.5 L42 114 L44.2 111.5" stroke="#2f5a68" stroke-width="1.100" fill="none"/><text x="17" y="123.5" font-size="3.6" fill="#777" text-anchor="start" font-weight="400" letter-spacing="0.3" font-family="Liberation Sans" textLength="50" lengthAdjust="spacingAndGlyphs">exchange of benefits</text><path d="M69 122.500 H85 M82.500 120.500 L85.500 122.500 L82.500 124.500" stroke="#2f5a68" stroke-width="1.100" fill="none"/><text x="90" y="123.5" font-size="3.6" fill="#777" text-anchor="start" font-weight="400" letter-spacing="0.3" font-family="Liberation Sans" textLength="34" lengthAdjust="spacingAndGlyphs">steady needs</text></svg><div class="t " style="left:26px;top:902px;font-size:15.5px;color:#50555f;transform:translate(-50%,-50%);">4</div><div class="b" style="left:328px;top:375px;width:14px;height:690px;background:#ececf2;"></div><div class="b" style="left:329px;top:375px;width:12px;height:180px;background:#dcdde3;border-radius:0 0 6px 6px;"></div><svg class="b" style="left:330px;top:1056px;" width="10" height="7" viewBox="0 0 10 7"><path d="M0.500 0.500 H9.500 L5 6Z" fill="#dfe0e5"/></svg><div class="b" style="left:155px;top:1076px;width:53px;height:31px;background:#f0f1f5;border-radius:7px;box-shadow:0 0 2px rgba(0,0,0,0.08);"></div><svg class="b" style="left:173px;top:1083px;" width="16" height="16" viewBox="0 0 16 16"><path d="M8 1 V15 M1 8 H15" stroke="#555a63" stroke-width="1.600"/></svg><div class="b" style="left:349.5px;top:375px;width:1.5px;height:740px;background:#dddee3;"></div><div class="b" style="left:1649.5px;top:375px;width:12.5px;height:690px;background:#e5e5ed;"></div><svg class="b" style="left:1651px;top:1050px;" width="10" height="7" viewBox="0 0 10 7"><path d="M0.500 0.500 H9.500 L5 6Z" fill="#dcdde2"/></svg><div class="b" style="left:352px;top:1066px;width:1298px;height:15px;background:#dddde2;"></div><div class="b" style="left:385px;top:1067.5px;width:1243px;height:12px;background:#d5d6db;border-radius:6px;"></div><svg class="b" style="left:357px;top:1069px;" width="7" height="10" viewBox="0 0 7 10"><path d="M6 0.500 V9.500 L0.500 5Z" fill="#dcdde2"/></svg><svg class="b" style="left:1634px;top:1069px;" width="7" height="10" viewBox="0 0 7 10"><path d="M1 0.500 V9.500 L6.500 5Z" fill="#cfd0d5"/></svg><div class="t " style="left:360px;top:1093px;font-size:11.8px;color:#6a6f78;transform:translate(0,-50%);">单击此处添加备注</div><div class="b" style="left:9px;top:375px;width:1698px;height:9px;background:linear-gradient(rgba(120,125,135,0.28),rgba(120,125,135,0));"></div><div class="b" style="left:9px;top:297px;width:1698px;height:78px;background:rgba(248,248,250,0.93);"></div><svg class="b" style="left:29px;top:308px;" width="28" height="30" viewBox="0 0 28 30"><g fill="none" stroke="#b4b8c0" stroke-width="1.2" stroke-linecap="round" stroke-linejoin="round"><path d="M8 4.500 H3 V24 H10"/><rect x="8" y="2" width="9" height="5" rx="1"/><path d="M17 4.500 H22 V10"/><rect x="11" y="11" width="14" height="17" rx="1" stroke="#e9c9b5"/></g></svg><div class="t " style="left:22px;top:352px;font-size:14px;color:#b9bcc3;transform:translate(0,-50%);">粘贴</div><svg class="b" style="left:54.5px;top:350px;" width="7" height="5" viewBox="0 0 7 5"><path d="M0 0 H7 L3.500 4.500Z" fill="#c3c6cc"/></svg><svg class="b" style="left:74px;top:306px;" width="22" height="24" viewBox="0 0 22 24"><g fill="none" stroke="#5a5f69" stroke-width="1.3" stroke-linecap="round" stroke-linejoin="round"><path d="M4 2 L15.500 17 M18 2 L6.500 17"/><circle cx="4.500" cy="19.500" r="3"/><circle cx="17.500" cy="19.500" r="3"/></g></svg><div class="t " style="left:99px;top:319px;font-size:14px;color:#50555f;transform:translate(0,-50%);">剪切</div><svg class="b" style="left:74px;top:337px;" width="22" height="24" viewBox="0 0 22 24"><g fill="none" stroke="#5a5f69" stroke-width="1.3" stroke-linecap="round" stroke-linejoin="round"><rect x="6.500" y="2" width="12" height="15" rx="1.500"/><path d="M6 6.500 H2.500 V22 H14 V17.500"/></g></svg><div class="t " style="left:100px;top:350px;font-size:14px;color:#50555f;transform:translate(0,-50%);">复制</div><svg class="b" style="left:150px;top:306px;" width="28" height="34" viewBox="0 0 28 34"><g fill="none" stroke="#5a5f69" stroke-width="1.3" stroke-linecap="round" stroke-linejoin="round"><path d="M11.500 2 H16.500 V13 H24 V19 H4 V13 H11.500Z"/><path d="M4 19 V30 H24 V19" stroke="#e8956a"/></g></svg><div class="t " style="left:143px;top:352px;font-size:14px;color:#50555f;transform:translate(0,-50%);">格式刷</div><div class="b" style="left:178px;top:311px;width:68px;height:27px;background:#e9ebef;"></div><div class="t " style="left:189px;top:324px;font-size:14px;color:#f8f8fa;transform:translate(0,-50%);">幻灯片</div><div class="b" style="left:205px;top:305px;width:100px;height:57px;background:rgba(240,241,245,0.75);border:1px solid #dfe1e6;border-radius:3px;box-sizing:border-box;"></div><svg class="b" style="left:239px;top:309px;" width="30" height="30" viewBox="0 0 30 30"><g fill="none" stroke="#4a4e57" stroke-width="1.3" stroke-linecap="round" stroke-linejoin="round"><circle cx="15" cy="15" r="12.500"/><path d="M11.500 9 L20.500 15 L11.500 21Z" stroke="#e8956a"/></g></svg><div class="t " style="left:213px;top:352px;font-size:14.2px;color:#50555f;transform:translate(0,-50%);">从当前开始</div><svg class="b" style="left:290.5px;top:350px;" width="7" height="5" viewBox="0 0 7 5"><path d="M0 0 H7 L3.500 4.500Z" fill="#777c86"/></svg><svg class="b" style="left:345px;top:308px;" width="32" height="28" viewBox="0 0 32 28"><g fill="none" stroke="#5a5f69" stroke-width="1.3" stroke-linecap="round" stroke-linejoin="round"><path d="M5 1.500 V8 M1.500 4.700 H8.500" stroke="#e8956a"/><path d="M12 6 H29 V24 H4 V12"/><rect x="8" y="11" width="17" height="4"/><path d="M8 19 H12 M15 19 H25"/></g></svg><div class="t " style="left:320px;top:352px;font-size:14.4px;color:#50555f;transform:translate(0,-50%);">新建幻灯片</div><svg class="b" style="left:397.5px;top:350px;" width="7" height="5" viewBox="0 0 7 5"><path d="M0 0 H7 L3.500 4.500Z" fill="#777c86"/></svg><svg class="b" style="left:427px;top:310px;" width="30" height="26" viewBox="0 0 30 26"><g fill="none" stroke="#4a4e57" stroke-width="1.4" stroke-linecap="round" stroke-linejoin="round"><rect x="1.500" y="2" width="26" height="21" rx="1"/><rect x="6" y="6.500" width="17" height="4.500"/><path d="M6 15 H10 M13 15 H23 M6 19 H10 M13 19 H23" stroke="#e8956a"/></g></svg><div class="t " style="left:421px;top:352px;font-size:14.2px;color:#50555f;transform:translate(0,-50%);">版式</div><svg class="b" style="left:454.5px;top:350px;" width="7" height="5" viewBox="0 0 7 5"><path d="M0 0 H7 L3.500 4.500Z" fill="#777c86"/></svg><svg class="b" style="left:474px;top:308px;" width="22" height="22" viewBox="0 0 22 22"><g fill="none" stroke="#5a5f69" stroke-width="1.2" stroke-linecap="round" stroke-linejoin="round"><path d="M19 9 V2 H2 V16 H8"/><path d="M5 6 H16 M5 10 H10"/><path d="M11 16 C11 12 17 11 18.500 14.500 M19 11.500 V15 H15.500" stroke="#e8956a"/></g></svg><div class="t " style="left:499px;top:319px;font-size:14px;color:#50555f;transform:translate(0,-50%);">重置</div><svg class="b" style="left:474px;top:338px;" width="22" height="22" viewBox="0 0 22 22"><g fill="none" stroke="#5a5f69" stroke-width="1.2" stroke-linecap="round" stroke-linejoin="round"><path d="M1.500 2 H7 L4.200 5.500Z" stroke="#e8956a"/><path d="M10 3 H19.500 M3 8.500 V20 H19.500 V8.500"/></g></svg><div class="t " style="left:499px;top:349px;font-size:14px;color:#50555f;transform:translate(0,-50%);">节</div><svg class="b" style="left:518.5px;top:347px;" width="7" height="5" viewBox="0 0 7 5"><path d="M0 0 H7 L3.500 4.500Z" fill="#777c86"/></svg><div class="b" style="left:538px;top:304px;width:1px;height:60px;background:#e6e7eb;"></div><div class="b" style="left:545px;top:306px;width:112px;height:26px;background:#fbfbfc;border:1px solid #ececf0;box-sizing:border-box;border-radius:2px;"></div><div class="b" style="left:659px;top:306px;width:102px;height:26px;background:#fbfbfc;border:1px solid #ececf0;box-sizing:border-box;border-radius:2px;"></div><svg class="b" style="left:644.5px;top:317px;" width="7" height="5" viewBox="0 0 7 5"><path d="M0 0 H7 L3.500 4.500Z" fill="#c0c3ca"/></svg><svg class="b" style="left:751.5px;top:317px;" width="7" height="5" viewBox="0 0 7 5"><path d="M0 0 H7 L3.500 4.500Z" fill="#c0c3ca"/></svg><svg class="b" style="left:771px;top:308px;" width="24" height="22" viewBox="0 0 24 22"><g fill="none" stroke="#8a8f99" stroke-width="1.2" stroke-linecap="round" stroke-linejoin="round"><path d="M2.500 19 L9.500 3 L16.500 19 M5 13.500 H14"/><path d="M17 4.500 H22 M19.500 2 V7" stroke="#e8956a" stroke-width="1"/></g></svg><svg class="b" style="left:800px;top:308px;" width="24" height="22" viewBox="0 0 24 22"><g fill="none" stroke="#8a8f99" stroke-width="1.2" stroke-linecap="round" stroke-linejoin="round"><path d="M2.500 19 L9.500 3 L16.500 19 M5 13.500 H14"/><path d="M17 4.500 H22" stroke="#e8956a" stroke-width="1"/></g></svg><svg class="b" style="left:841px;top:308px;" width="24" height="22" viewBox="0 0 24 22"><g fill="none" stroke="#8a8f99" stroke-width="1.2" stroke-linecap="round" stroke-linejoin="round"><path d="M3 13 L12 3 L21 10.500 L13.500 19 H8Z M7.500 8 L16.500 15.500 M8 19 H20"/></g></svg><div class="t " style="left:555px;top:349.5px;font-size:22.5px;color:#767b85;transform:translate(0,-50%);font-weight:700;">B</div><div class="t " style="left:597px;top:349.5px;font-size:22px;color:#8a8f99;transform:translate(0,-50%);font-style:italic;">I</div><svg class="b" style="left:633px;top:339px;" width="20" height="22" viewBox="0 0 20 22"><g fill="none" stroke="#8a8f99" stroke-width="1.3" stroke-linecap="round" stroke-linejoin="round"><path d="M3 2 V10 C3 17 15 17 15 10 V2"/><path d="M1 20 H17" stroke="#e8956a"/></g></svg><div class="t " style="left:683.5px;top:349.5px;font-size:21.5px;color:#8a8f99;transform:translate(-50%,-50%);font-weight:400;">S</div><div class="b" style="left:674px;top:349px;width:19px;height:1.2px;background:#8a8f99;"></div><svg class="b" style="left:712px;top:339px;" width="24" height="20" viewBox="0 0 24 20"><g fill="none" stroke="#8a8f99" stroke-width="1.2" stroke-linecap="round" stroke-linejoin="round"><path d="M2 4 L14 18 M14 4 L2 18"/><path d="M16.500 3.500 C17.500 2 20 2.500 19.500 4.500 L16.500 8 H20.500" stroke-width="0.9" stroke="#e8956a"/></g></svg><svg class="b" style="left:751px;top:339px;" width="24" height="22" viewBox="0 0 24 22"><g fill="none" stroke="#8a8f99" stroke-width="1.2" stroke-linecap="round" stroke-linejoin="round"><path d="M2 3 L14 17 M14 3 L2 17"/><path d="M16.500 13.500 C17.500 12 20 12.500 19.500 14.500 L16.500 18 H20.500" stroke-width="0.9" stroke="#e8956a"/></g></svg><svg class="b" style="left:789px;top:338px;" width="22" height="24" viewBox="0 0 22 24"><path d="M2 17 H20" stroke="#f5e85a" stroke-width="5" stroke-linecap="round"/><text x="2" y="14" font-size="14" fill="#8a8f99" font-family="Liberation Sans">ab</text><path d="M12 14 L19 5" stroke="#8a8f99" stroke-width="1.2"/></svg><svg class="b" style="left:812.5px;top:347px;" width="7" height="5" viewBox="0 0 7 5"><path d="M0 0 H7 L3.500 4.500Z" fill="#b0b4bb"/></svg><svg class="b" style="left:831px;top:338px;" width="20" height="24" viewBox="0 0 20 24"><g fill="none" stroke="#8a8f99" stroke-width="1.2" stroke-linecap="round" stroke-linejoin="round"><path d="M3 15 L9.500 2.500 L16 15 M5.500 10.500 H13.500"/><path d="M2 20 H17" stroke="#f25d6a" stroke-width="3.200"/></g></svg><svg class="b" style="left:853.5px;top:347px;" width="7" height="5" viewBox="0 0 7 5"><path d="M0 0 H7 L3.500 4.500Z" fill="#c0c3ca"/></svg><div class="b" style="left:871px;top:304px;width:1px;height:60px;background:#e6e7eb;"></div><svg class="b" style="left:882px;top:310px;" width="20" height="18" viewBox="0 0 20 18"><g stroke="#8a8f99" stroke-width="1.300"><path d="M7 2.500 H18 M7 8.500 H18 M7 14.500 H18"/></g><g fill="none" stroke="#e8956a" stroke-width="1"><circle cx="2.500" cy="2.500" r="1.500"/><circle cx="2.500" cy="8.500" r="1.500"/><circle cx="2.500" cy="14.500" r="1.500"/></g></svg><svg class="b" style="left:904.5px;top:316px;" width="7" height="5" viewBox="0 0 7 5"><path d="M0 0 H7 L3.500 4.500Z" fill="#b0b4bb"/></svg><svg class="b" style="left:921px;top:309px;" width="20" height="20" viewBox="0 0 20 20"><g stroke="#8a8f99" stroke-width="1.300"><path d="M8 3.500 H19 M8 9.500 H19 M8 15.500 H19"/></g><g fill="#e8956a" font-size="7" font-family="Liberation Sans"><text x="1" y="6">1</text><text x="1" y="12">2</text><text x="1" y="18">3</text></g></svg><svg class="b" style="left:945.5px;top:316px;" width="7" height="5" viewBox="0 0 7 5"><path d="M0 0 H7 L3.500 4.500Z" fill="#b0b4bb"/></svg><svg class="b" style="left:971px;top:310px;" width="20" height="18" viewBox="0 0 20 18"><g stroke="#8a8f99" stroke-width="1.300" fill="none"><path d="M1 2.500 H19 M10 8.500 H19 M1 14.500 H19"/><path d="M7 8.500 H1.500 M3.500 6.500 L1.500 8.500 L3.500 10.500" stroke="#e8956a" stroke-width="1"/></g></svg><svg class="b" style="left:1001px;top:310px;" width="20" height="18" viewBox="0 0 20 18"><g stroke="#8a8f99" stroke-width="1.300" fill="none"><path d="M1 2.500 H19 M10 8.500 H19 M1 14.500 H19"/><path d="M1 8.500 H6.500 M4.500 6.500 L6.500 8.500 L4.500 10.500" stroke="#e8956a" stroke-width="1"/></g></svg><svg class="b" style="left:1038px;top:307px;" width="22" height="24" viewBox="0 0 22 24"><g fill="none" stroke-width="1.300"><path d="M4.500 3 V20 M1.500 17 L4.500 20 L7.500 17" stroke="#5a5f69"/><path d="M9 11 L12.500 3 L16 11 M10.200 8.500 H14.800" stroke="#5a5f69"/><path d="M12.500 14 V21 M10.500 19 L12.500 21 L14.500 19 M10.500 16 L12.500 14 L14.500 16" stroke="#e8956a" stroke-width="1"/></g></svg><svg class="b" style="left:1060.5px;top:316px;" width="7" height="5" viewBox="0 0 7 5"><path d="M0 0 H7 L3.500 4.500Z" fill="#5a5f69"/></svg><svg class="b" style="left:1077px;top:307px;" width="20" height="24" viewBox="0 0 20 24"><g fill="none" stroke="#9a9ea7" stroke-width="1.200"><path d="M4.500 3 H1.500 V21 H4.500 M15.500 3 H18.500 V21 H15.500 M5 10 H15 M5 14 H15"/><path d="M10 2 V8 M8 4 L10 2 L12 4 M10 22 V16 M8 20 L10 22 L12 20" stroke="#e8956a" stroke-width="0.9"/></g></svg><svg class="b" style="left:1101.5px;top:316px;" width="7" height="5" viewBox="0 0 7 5"><path d="M0 0 H7 L3.500 4.500Z" fill="#c0c3ca"/></svg><svg class="b" style="left:1119px;top:309px;" width="22" height="20" viewBox="0 0 22 20"><g fill="none" stroke="#8a8f99" stroke-width="1.200"><path d="M1 1.500 H20 M1 17.500 H20"/></g><text x="3" y="14" font-size="11.500" fill="#8a8f99" font-family="Liberation Sans">AB</text></svg><svg class="b" style="left:1143.5px;top:316px;" width="7" height="5" viewBox="0 0 7 5"><path d="M0 0 H7 L3.500 4.500Z" fill="#c0c3ca"/></svg><svg class="b" style="left:883px;top:341px;" width="20" height="18" viewBox="0 0 20 18"><g stroke="#8a8f99" stroke-width="1.300"><path d="M0 1.5 H17"/><path d="M0 6.5 H10"/><path d="M0 11.5 H17"/><path d="M0 16.5 H10"/></g></svg><svg class="b" style="left:916px;top:341px;" width="20" height="18" viewBox="0 0 20 18"><g stroke="#8a8f99" stroke-width="1.300"><path d="M0 1.5 H17"/><path d="M3.5 6.5 H13.5"/><path d="M0 11.5 H17"/><path d="M3.5 16.5 H13.5"/></g></svg><svg class="b" style="left:949px;top:341px;" width="20" height="18" viewBox="0 0 20 18"><g stroke="#8a8f99" stroke-width="1.300"><path d="M0 1.5 H17"/><path d="M7 6.5 H17"/><path d="M0 11.5 H17"/><path d="M7 16.5 H17"/></g></svg><svg class="b" style="left:982px;top:341px;" width="20" height="18" viewBox="0 0 20 18"><g stroke="#8a8f99" stroke-width="1.300"><path d="M0 1.5 H17"/><path d="M0 6.5 H17"/><path d="M0 11.5 H17"/><path d="M0 16.5 H17"/></g></svg><svg class="b" style="left:1014px;top:340px;" width="22" height="20" viewBox="0 0 22 20"><g fill="none" stroke="#8a8f99" stroke-width="1.300"><path d="M1.500 2 V18 M18.500 2 V18 M4 8 H16 M4 12 H16 M4 16 H16"/><path d="M4.500 3.500 H15.500 M6.500 1.500 L4.500 3.500 L6.500 5.500 M13.500 1.500 L15.500 3.500 L13.500 5.500" stroke="#e8956a" stroke-width="0.9"/></g></svg><svg class="b" style="left:1055px;top:340px;" width="22" height="20" viewBox="0 0 22 20"><g fill="none" stroke="#9a9ea7" stroke-width="1.300"><path d="M9 2.500 H19 M9 9.500 H19 M9 16.500 H19"/><path d="M4 2 V8 M2 4 L4 2 L6 4 M4 18 V12 M2 16 L4 18 L6 16" stroke="#e8956a" stroke-width="0.9"/></g></svg><svg class="b" style="left:1088px;top:340px;" width="22" height="20" viewBox="0 0 22 20"><g fill="none" stroke="#9a9ea7" stroke-width="1.300"><path d="M9 2.500 H19 M9 9.500 H19 M9 16.500 H19"/><path d="M4 1 V7 M2 5 L4 7 L6 5 M4 18 V11 M2 13 L4 11 L6 13" stroke="#e8956a" stroke-width="0.9"/></g></svg><svg class="b" style="left:1120px;top:340px;" width="22" height="20" viewBox="0 0 22 20"><g fill="none" stroke="#9a9ea7" stroke-width="1.300"><path d="M9 2.500 H19 M9 9.500 H19 M9 16.500 H19"/><path d="M4 1.500 V18 M2 3.500 L4 1.500 L6 3.500 M2 16 L4 18 L6 16" stroke="#e8956a" stroke-width="0.9"/></g></svg><svg class="b" style="left:1143.5px;top:347px;" width="7" height="5" viewBox="0 0 7 5"><path d="M0 0 H7 L3.500 4.500Z" fill="#c0c3ca"/></svg><div class="b" style="left:1160px;top:304px;width:1px;height:60px;background:#e6e7eb;"></div><svg class="b" style="left:1185px;top:309px;" width="30" height="30" viewBox="0 0 30 30"><rect x="2.500" y="2.500" width="24" height="22" fill="none" stroke="#e8956a" stroke-width="1.200"/><g fill="#fff" stroke="#e8956a" stroke-width="0.9"><rect x="1" y="1" width="3" height="3"/><rect x="25" y="1" width="3" height="3"/><rect x="1" y="23" width="3" height="3"/><rect x="25" y="23" width="3" height="3"/></g><path d="M6.500 15.500 L10.500 6.500 L14.500 15.500 M8 12.500 H13 M17.500 9 H23 M17.500 13 H23 M6.500 19.500 H23" fill="none" stroke="#4a4e57" stroke-width="1.300"/></svg><div class="t " style="left:1174px;top:352px;font-size:14.2px;color:#50555f;transform:translate(0,-50%);">文本框</div><svg class="b" style="left:1220.5px;top:350px;" width="7" height="5" viewBox="0 0 7 5"><path d="M0 0 H7 L3.500 4.500Z" fill="#777c86"/></svg><svg class="b" style="left:1247px;top:308px;" width="34" height="32" viewBox="0 0 34 32"><rect x="2" y="2" width="17" height="17" fill="#fff" stroke="#4a4e57" stroke-width="1.300"/><circle cx="20" cy="20" r="9.500" fill="#fdebe4" stroke="#e8956a" stroke-width="1.200"/></svg><div class="t " style="left:1243px;top:352px;font-size:14.2px;color:#50555f;transform:translate(0,-50%);">形状</div><svg class="b" style="left:1276.5px;top:350px;" width="7" height="5" viewBox="0 0 7 5"><path d="M0 0 H7 L3.500 4.500Z" fill="#777c86"/></svg><svg class="b" style="left:1296px;top:309px;" width="22" height="20" viewBox="0 0 22 20"><g fill="none" stroke="#5a5f69" stroke-width="1.2" stroke-linecap="round" stroke-linejoin="round"><rect x="1.500" y="1.500" width="17" height="15" rx="1"/><path d="M1.500 14 L8 7.500 L15.500 16"/><circle cx="14" cy="5.500" r="1.500" stroke="#e8956a"/></g></svg><div class="t " style="left:1321px;top:319px;font-size:14px;color:#50555f;transform:translate(0,-50%);">图片</div><svg class="b" style="left:1355.5px;top:316px;" width="7" height="5" viewBox="0 0 7 5"><path d="M0 0 H7 L3.500 4.500Z" fill="#777c86"/></svg><svg class="b" style="left:1295px;top:338px;" width="22" height="24" viewBox="0 0 22 24"><g fill="none" stroke="#4a4e57" stroke-width="1.3" stroke-linecap="round" stroke-linejoin="round"><path d="M10.500 1.500 L19 6 L10.500 10.500 L2 6Z"/><path d="M4.500 9.500 L2 11 L10.500 15.500 L19 11 L16.500 9.500" stroke="#e8956a"/><path d="M4.500 14.500 L2 16 L10.500 20.500 L19 16 L16.500 14.500"/></g></svg><div class="t " style="left:1321px;top:350px;font-size:14px;color:#50555f;transform:translate(0,-50%);">排列</div><svg class="b" style="left:1355.5px;top:347px;" width="7" height="5" viewBox="0 0 7 5"><path d="M0 0 H7 L3.500 4.500Z" fill="#777c86"/></svg><svg class="b" style="left:1373px;top:309px;" width="22" height="20" viewBox="0 0 22 20"><g fill="none" stroke="#b9bcc3" stroke-width="1.2" stroke-linecap="round" stroke-linejoin="round"><path d="M10 2 L17.500 9 L14 12.500 H6 L2.500 9Z"/><path d="M2 16.500 H18" stroke="#9fcfc0" stroke-width="2.400"/></g></svg><div class="t " style="left:1397px;top:319px;font-size:14px;color:#b4b8c0;transform:translate(0,-50%);">填充</div><svg class="b" style="left:1432.5px;top:316px;" width="7" height="5" viewBox="0 0 7 5"><path d="M0 0 H7 L3.500 4.500Z" fill="#d0d2d8"/></svg><svg class="b" style="left:1373px;top:340px;" width="22" height="20" viewBox="0 0 22 20"><g fill="none" stroke="#b9bcc3" stroke-width="1.2" stroke-linecap="round" stroke-linejoin="round"><rect x="2" y="1.500" width="16" height="11.500"/><rect x="5" y="4.500" width="10" height="5.500" stroke-width="0.9"/><path d="M2 16.500 H18" stroke="#9fcfc0" stroke-width="2.400"/></g></svg><div class="t " style="left:1397px;top:350px;font-size:14px;color:#b4b8c0;transform:translate(0,-50%);">轮廓</div><svg class="b" style="left:1432.5px;top:347px;" width="7" height="5" viewBox="0 0 7 5"><path d="M0 0 H7 L3.500 4.500Z" fill="#d0d2d8"/></svg><div class="b" style="left:1449px;top:304px;width:1px;height:60px;background:#e6e7eb;"></div><svg class="b" style="left:1458px;top:307px;" width="24" height="24" viewBox="0 0 24 24"><g fill="none" stroke="#8a8f99" stroke-width="1.3" stroke-linecap="round" stroke-linejoin="round"><circle cx="9.500" cy="9.500" r="7.500" stroke="#e8956a"/><path d="M15 15 L21 21"/></g></svg><div class="t " style="left:1483px;top:319px;font-size:14px;color:#50555f;transform:translate(0,-50%);">查找</div><svg class="b" style="left:1458px;top:337px;" width="24" height="26" viewBox="0 0 24 26"><g fill="none" stroke="#5a5f69" stroke-width="1.200"><path d="M6.500 4 H2 V17 H8 M6 15 L8 17 L6 19"/><path d="M9 10 L13 2 L17 10 M10.300 7.500 H15.700"/></g><text x="12.500" y="24" font-size="11" fill="#e8956a" font-family="Liberation Sans">B</text></svg><div class="t " style="left:1483px;top:350px;font-size:14px;color:#50555f;transform:translate(0,-50%);">替换</div><svg class="b" style="left:1518.5px;top:347px;" width="7" height="5" viewBox="0 0 7 5"><path d="M0 0 H7 L3.500 4.500Z" fill="#777c86"/></svg><div class="b" style="left:1535px;top:304px;width:1px;height:60px;background:#e6e7eb;"></div><svg class="b" style="left:1561px;top:308px;" width="34" height="34" viewBox="0 0 34 34"><path d="M14 22 H2.500 V2.500 H27 V12" fill="none" stroke="#4a4e57" stroke-width="1.300"/><rect x="3.500" y="3.500" width="11" height="7" fill="#e4e6ea"/><path d="M14.500 3 V11 M3 11 H27" stroke="#8a8f99" stroke-width="0.900" stroke-dasharray="1.500 1.500"/><path d="M16 12 L28 19 L22 20.500 L19.500 27Z" fill="#fff" stroke="#e8956a" stroke-width="1.200" stroke-linejoin="round"/></svg><div class="t " style="left:1549px;top:352px;font-size:14.2px;color:#50555f;transform:translate(0,-50%);">选择窗格</div><div class="b" style="left:1620px;top:304px;width:1px;height:60px;background:#e6e7eb;"></div><svg class="b" style="left:1674px;top:340px;" width="22" height="20" viewBox="0 0 22 20"><g fill="none" stroke="#d4d6dc" stroke-width="1.1" stroke-linecap="round" stroke-linejoin="round"><rect x="1.500" y="5.500" width="12" height="12"/><path d="M5 5.500 V2 H19 V14 H13.500"/></g></svg><svg class="b" style="left:186px;top:365px;" width="6" height="6" viewBox="0 0 6 6"><path d="M5.500 0 V5.500 H0" fill="none" stroke="#a0a4ad" stroke-width="1"/></svg><svg class="b" style="left:858px;top:365px;" width="6" height="6" viewBox="0 0 6 6"><path d="M5.500 0 V5.500 H0" fill="none" stroke="#a0a4ad" stroke-width="1"/></svg><svg class="b" style="left:1146px;top:365px;" width="6" height="6" viewBox="0 0 6 6"><path d="M5.500 0 V5.500 H0" fill="none" stroke="#a0a4ad" stroke-width="1"/></svg><svg class="b" style="left:1436px;top:365px;" width="6" height="6" viewBox="0 0 6 6"><path d="M5.500 0 V5.500 H0" fill="none" stroke="#a0a4ad" stroke-width="1"/></svg><div class="b" style="left:1663px;top:375px;width:44px;height:740px;background:#f4f5f9;"></div><div class="b" style="left:1663px;top:375px;width:1px;height:740px;background:#e6e7eb;"></div><svg class="b" style="left:1673px;top:381px;" width="22" height="22" viewBox="0 0 22 22"><g fill="none" stroke="#5a5f69" stroke-width="1.3" stroke-linecap="round" stroke-linejoin="round"><path d="M9 14.500 H3 V3 H15 V8"/><circle cx="13.500" cy="13.500" r="5.500"/></g></svg><svg class="b" style="left:1673px;top:422px;" width="22" height="24" viewBox="0 0 22 24"><g fill="none" stroke="#5a5f69" stroke-width="1.3" stroke-linecap="round" stroke-linejoin="round"><path d="M4.500 15 L11 2 L17.500 15 M7 10.500 H15"/><path d="M3.500 18.500 H18.500 M6 21.500 H16"/></g></svg><svg class="b" style="left:1673px;top:465px;" width="22" height="22" viewBox="0 0 22 22"><g fill="none" stroke="#5a5f69" stroke-width="1.2" stroke-linecap="round" stroke-linejoin="round"><path d="M11 2 L19 6.500 V15.500 L11 20 L3 15.500 V6.500Z"/><circle cx="11" cy="11" r="4"/><path d="M9 13 C10 10 12 10 13 8.500 M11 11 L12.500 12.500"/></g></svg><svg class="b" style="left:1673px;top:508px;" width="22" height="22" viewBox="0 0 22 22"><g fill="none" stroke="#5a5f69" stroke-width="1.2" stroke-linecap="round" stroke-linejoin="round"><rect x="4" y="7.500" width="12" height="10" rx="1"/><path d="M7 7.500 V4.500 H18.500 V14 H16 M6.500 11 H13.500 M6.500 14 H11"/></g></svg><svg class="b" style="left:1673px;top:550px;" width="22" height="22" viewBox="0 0 22 22"><g fill="none" stroke="#5a5f69" stroke-width="1.1" stroke-linecap="round" stroke-linejoin="round"><path d="M12.500 2 L15 7.500 L20.500 8.300 L16.500 12.300 L17.500 18 L12.500 15.200 L9 17 L9.500 12.300 L6 8.500 L10.500 7.500Z"/><path d="M3 14 L6 12 M3.500 18.500 L6.500 16 M7 20.500 L9 18.500"/></g></svg><svg class="b" style="left:1673px;top:593px;" width="22" height="22" viewBox="0 0 22 22"><g fill="none" stroke="#5a5f69" stroke-width="1.2" stroke-linecap="round" stroke-linejoin="round"><path d="M7 6 H20 M2 16 H13"/><circle cx="4.500" cy="6" r="2.300"/><circle cx="15.500" cy="16" r="2.300"/><path d="M18 16 H20"/></g></svg><svg class="b" style="left:1673px;top:635px;" width="22" height="22" viewBox="0 0 22 22"><g fill="none" stroke="#5a5f69" stroke-width="1.2" stroke-linecap="round" stroke-linejoin="round"><path d="M4 7 C7 1.500 16 1.500 18.500 8 C20.500 14 15 20 9 18.500 C6 17.800 4 15.500 3.500 13"/><path d="M1.500 5.500 L4 7.500 L6.500 5.500 M11 6.500 V11.500 H15"/></g></svg><svg class="b" style="left:1673px;top:677px;" width="22" height="22" viewBox="0 0 22 22"><g fill="none" stroke="#5a5f69" stroke-width="1.2" stroke-linecap="round" stroke-linejoin="round"><rect x="2" y="4" width="14" height="12" rx="1"/><path d="M2 13.500 L7 9 L12 15.500"/><circle cx="11.500" cy="7.500" r="1.300"/><path d="M18.500 7 V18.500 M21 9.500 V18.500 M6 18.500 H21"/></g></svg><svg class="b" style="left:1673px;top:720px;" width="22" height="22" viewBox="0 0 22 22"><g fill="none" stroke="#cfd1d7" stroke-width="1.1" stroke-linecap="round" stroke-linejoin="round"><path d="M11 3 L18.500 7 V16 L11 20 L3.500 16 V7Z M3.500 7 L11 11 L18.500 7"/></g></svg><div class="b" style="left:9px;top:1146px;width:1698px;height:91.5px;background:linear-gradient(90deg,#d6b29e 0%,#d4ae9a 14%,#8a7a72 17%,#1e181a 20%,#2a3a44 27%,#7a8088 31%,#3a4a58 36%,#5a7080 45%,#4a6070 53%,#c8c0bc 55%,#3a2a28 58%,#3a4650 63%,#6a7030 68%,#2a3a3a 74%,#8a8040 80%,#b0b0b0 87%,#4a4a48 93%,#2e3a20 97%,#2e3a20 100%);"></div><svg class="b" style="left:9px;top:1146px;" width="90" height="91.5" viewBox="0 0 90 91.5"><defs><filter id="egb" x="-10%" y="-10%" width="120%" height="120%"><feGaussianBlur stdDeviation="1.3"/></filter></defs><rect width="90" height="92" fill="#d9b5a2"/><g filter="url(#egb)"><rect x="-3" y="-3" width="95" height="52" fill="#d2a894"/><ellipse cx="8" cy="11" rx="11" ry="9.500" fill="#ecd6c8"/><path d="M-4 8 C0 -4 16 -4 20 8" stroke="#8a4232" stroke-width="2.200" fill="none"/><ellipse cx="33" cy="9" rx="11" ry="9.500" fill="#ecd6c8"/><path d="M21 6 C25 -6 41 -6 45 6" stroke="#8a4232" stroke-width="2.200" fill="none"/><ellipse cx="56" cy="7" rx="11" ry="9.500" fill="#ecd6c8"/><path d="M44 4 C48 -8 64 -8 68 4" stroke="#8a4232" stroke-width="2.200" fill="none"/><ellipse cx="20" cy="29" rx="11" ry="9.500" fill="#ecd6c8"/><path d="M8 26 C12 14 28 14 32 26" stroke="#8a4232" stroke-width="2.200" fill="none"/><ellipse cx="45" cy="27" rx="11" ry="9.500" fill="#ecd6c8"/><path d="M33 24 C37 12 53 12 57 24" stroke="#8a4232" stroke-width="2.200" fill="none"/><ellipse cx="6" cy="45" rx="11" ry="9.500" fill="#ecd6c8"/><path d="M-6 42 C-2 30 14 30 18 42" stroke="#8a4232" stroke-width="2.200" fill="none"/><ellipse cx="30" cy="47" rx="11" ry="9.500" fill="#ecd6c8"/><path d="M18 44 C22 32 38 32 42 44" stroke="#8a4232" stroke-width="2.200" fill="none"/><ellipse cx="68" cy="25" rx="11" ry="9.500" fill="#ecd6c8"/><path d="M56 22 C60 10 76 10 80 22" stroke="#8a4232" stroke-width="2.200" fill="none"/><ellipse cx="56" cy="45" rx="11" ry="9.500" fill="#ecd6c8"/><path d="M44 42 C48 30 64 30 68 42" stroke="#8a4232" stroke-width="2.200" fill="none"/><rect x="-3" y="47" width="95" height="8" fill="#c49a86"/></g></svg><svg class="b" style="left:1640px;top:1146px;" width="67" height="91.5" viewBox="0 0 67 91.5"><defs><filter id="fol" x="-10%" y="-10%" width="120%" height="120%"><feGaussianBlur stdDeviation="1.500"/></filter></defs><rect width="67" height="92" fill="#2c381f"/><g filter="url(#fol)"><circle cx="20" cy="20" r="10" fill="#46552c"/><circle cx="45" cy="12" r="9" fill="#1e2816"/><circle cx="52" cy="40" r="12" fill="#4e5c34"/><circle cx="25" cy="52" r="10" fill="#222c18"/><circle cx="40" cy="66" r="9" fill="#5a6a40"/><circle cx="12" cy="72" r="8" fill="#3a4826"/><rect x="12" y="78" width="38" height="16" rx="3" fill="#d22c20"/><rect x="52" y="60" width="15" height="32" fill="#1a1a1a"/></g></svg><div class="b" style="left:70px;top:1148px;width:1575px;height:84px;background:linear-gradient(90deg,#d6a48b 0%,#d3a690 12%,#c9a596 24%,#a89d9a 31%,#8e979e 38%,#87929a 52%,#8a949b 60%,#a39b95 66%,#a99f94 72%,#a19c8e 78%,#97988a 86%,#909283 100%);border-radius:22px;box-shadow:0 0 0 1px rgba(255,255,255,0.18) inset;"></div><svg class="b" style="left:82.5px;top:1160px;" width="54" height="54" viewBox="0 0 54 54"><defs><linearGradient id="fg" x1="0" y1="0" x2="0" y2="1"><stop offset="0" stop-color="#2fb4f5"/><stop offset="1" stop-color="#1a6fe8"/></linearGradient><clipPath id="fc"><rect x="0" y="0" width="54" height="54" rx="12"/></clipPath></defs><g clip-path="url(#fc)"><rect width="54" height="54" fill="url(#fg)"/><path d="M30 0 C24 12 23 24 24 31 H30 C30 40 31 48 33 54 H54 V0Z" fill="#e8eef6"/><path d="M15 14 V19 M39 14 V19" stroke="#1c2a3a" stroke-width="2" stroke-linecap="round"/><path d="M11 37 C20 45 34 45 43 37" stroke="#1c2a3a" stroke-width="2" fill="none" stroke-linecap="round"/></g></svg><svg class="b" style="left:154.7px;top:1160px;" width="54" height="54" viewBox="0 0 54 54"><defs><radialGradient id="sg" cx="0.5" cy="0.5" r="0.5"><stop offset="0" stop-color="#ffffff"/><stop offset="0.1" stop-color="#d8f2ff"/><stop offset="0.3" stop-color="#7a5ae0" stop-opacity="0.55"/><stop offset="0.7" stop-color="#2a2a80" stop-opacity="0.25"/><stop offset="1" stop-color="#1a1f55" stop-opacity="0.5"/></radialGradient><filter id="sgb"><feGaussianBlur stdDeviation="1.300"/></filter><clipPath id="sgc"><circle cx="27" cy="27" r="21"/></clipPath><clipPath id="sgr"><rect width="54" height="54" rx="12"/></clipPath></defs><g clip-path="url(#sgr)"><rect width="54" height="54" fill="#171b4c"/><path d="M0 0 H34 L8 54 H0Z" fill="#32146a" opacity="0.7"/></g><g clip-path="url(#sgc)"><circle cx="27" cy="27" r="21" fill="#20245c"/><g filter="url(#sgb)"><path d="M27 27 L12 9 L36 5Z" fill="#f0309a"/><path d="M27 27 L38 8 L46 20Z" fill="#c030c8"/><path d="M27 27 L48 22 L47 36Z" fill="#20d0a0"/><path d="M27 27 L6 40 L14 47Z" fill="#30d0f8"/><path d="M27 27 L31 49 L39 45Z" fill="#f040a8"/><path d="M27 27 L5 20 L6 31Z" fill="#3868e0"/><path d="M27 27 L18 50 L26 50Z" fill="#2a40b0"/></g><circle cx="27" cy="27" r="21" fill="url(#sg)"/><path d="M10 38 L44 18 M22 8 L32 46" stroke="#fff" stroke-opacity="0.55" stroke-width="1.200"/></g><circle cx="27" cy="27" r="21.500" fill="none" stroke="#8fa4e0" stroke-opacity="0.65" stroke-width="1.300"/></svg><svg class="b" style="left:225.4px;top:1160px;" width="54" height="54" viewBox="0 0 54 54"><rect x="0" y="0" width="54" height="54" rx="12" fill="#efe6e2" /><rect x="9" y="9" width="9.5" height="9.5" rx="2.5" fill="#3ed04a" /><rect x="22.3" y="9" width="9.5" height="9.5" rx="2.5" fill="#f5b52a" /><rect x="35.6" y="9" width="9.5" height="9.5" rx="2.5" fill="#f5892a" /><rect x="9" y="22.3" width="9.5" height="9.5" rx="2.5" fill="#e8252a" /><rect x="22.3" y="22.3" width="9.5" height="9.5" rx="2.5" fill="#b0b0b4" /><rect x="35.6" y="22.3" width="9.5" height="9.5" rx="2.5" fill="#f53a6a" /><rect x="9" y="35.6" width="9.5" height="9.5" rx="2.5" fill="#a94fd8" /><rect x="22.3" y="35.6" width="9.5" height="9.5" rx="2.5" fill="#2aa5f5" /><rect x="35.6" y="35.6" width="9.5" height="9.5" rx="2.5" fill="#2ad09a" /></svg><svg class="b" style="left:297.3px;top:1160px;" width="54" height="54" viewBox="0 0 54 54"><rect x="0" y="0" width="54" height="54" rx="12" fill="#f2f3f5" /><defs><linearGradient id="sfg" x1="0" y1="0" x2="0" y2="1"><stop offset="0" stop-color="#2fa8f5"/><stop offset="1" stop-color="#1a78e0"/></linearGradient></defs><circle cx="27" cy="27" r="22.500" fill="url(#sfg)"/><circle cx="27" cy="27" r="19.500" fill="none" stroke="#cfe6fb" stroke-width="3" stroke-dasharray="0.800 2.200"/><path d="M42 12 L29.500 29.500 L24.500 24.500Z" fill="#e8453a"/><path d="M12 42 L24.500 24.500 L29.500 29.500Z" fill="#f4f6f8"/></svg><svg class="b" style="left:369.3px;top:1160px;" width="54" height="54" viewBox="0 0 54 54"><defs><linearGradient id="mlg" x1="0" y1="0" x2="0" y2="1"><stop offset="0" stop-color="#1e8af5"/><stop offset="1" stop-color="#18b4fa"/></linearGradient></defs><rect x="0" y="0" width="54" height="54" rx="12" fill="url(#mlg)" /><rect x="9" y="15" width="36" height="24" rx="3" fill="#f4f5f7" /><path d="M10 17 L27 31 L44 17 M10 37.500 L21.500 26.500 M44 37.500 L32.500 26.500" stroke="#c2c6cc" stroke-width="1.500" fill="none"/></svg><svg class="b" style="left:441px;top:1160px;" width="54" height="54" viewBox="0 0 54 54"><clipPath id="cc"><rect width="54" height="54" rx="12"/></clipPath><g clip-path="url(#cc)"><rect width="54" height="54" fill="#f7f7f7"/><rect width="54" height="17" fill="#f0443c"/></g></svg><div class="t semi" style="left:468px;top:1169px;font-size:11.5px;color:#fff;transform:translate(-50%,-50%);font-weight:700;">3月</div><div class="t " style="left:468px;top:1194px;font-size:33px;color:#222;transform:translate(-50%,-50%);">7</div><svg class="b" style="left:513px;top:1160px;" width="54" height="54" viewBox="0 0 54 54"><clipPath id="nc"><rect width="54" height="54" rx="12"/></clipPath><g clip-path="url(#nc)"><rect width="54" height="54" fill="#f6f3ea"/><rect width="54" height="12" fill="#fbd438"/><path d="M0 19.500 H54 M0 30 H54" stroke="#e0dcd0" stroke-width="1"/></g></svg><svg class="b" style="left:584px;top:1160px;" width="54" height="54" viewBox="0 0 54 54"><rect x="0" y="0" width="54" height="54" rx="12" fill="#f8f8f8" /><circle cx="11" cy="13" r="3.800" fill="none" stroke="#2f8af5" stroke-width="1"/><circle cx="11" cy="13" r="2.300" fill="#2f8af5"/><path d="M20 13 H47" stroke="#d8d8dc" stroke-width="1.200"/><circle cx="11" cy="26.5" r="3.800" fill="none" stroke="#f0453c" stroke-width="1"/><circle cx="11" cy="26.5" r="2.300" fill="#f0453c"/><path d="M20 26.5 H47" stroke="#d8d8dc" stroke-width="1.200"/><circle cx="11" cy="40" r="3.800" fill="none" stroke="#f5952a" stroke-width="1"/><circle cx="11" cy="40" r="2.300" fill="#f5952a"/><path d="M20 40 H47" stroke="#d8d8dc" stroke-width="1.200"/></svg><svg class="b" style="left:656px;top:1160px;" width="54" height="54" viewBox="0 0 54 54"><rect x="0" y="0" width="54" height="54" rx="12" fill="#f8f8f8" /><ellipse cx="27" cy="16" rx="6.500" ry="11" fill="#f5a623" fill-opacity="0.78" transform="rotate(0 27 16)"/><ellipse cx="34.7782" cy="19.2218" rx="6.500" ry="11" fill="#f5d423" fill-opacity="0.78" transform="rotate(45 34.7782 19.2218)"/><ellipse cx="38" cy="27" rx="6.500" ry="11" fill="#9ad03a" fill-opacity="0.78" transform="rotate(90 38 27)"/><ellipse cx="34.7782" cy="34.7782" rx="6.500" ry="11" fill="#3ac07a" fill-opacity="0.78" transform="rotate(135 34.7782 34.7782)"/><ellipse cx="27" cy="38" rx="6.500" ry="11" fill="#3aa0e8" fill-opacity="0.78" transform="rotate(180 27 38)"/><ellipse cx="19.2218" cy="34.7782" rx="6.500" ry="11" fill="#7a6ae0" fill-opacity="0.78" transform="rotate(225 19.2218 34.7782)"/><ellipse cx="16" cy="27" rx="6.500" ry="11" fill="#d05ab8" fill-opacity="0.78" transform="rotate(270 16 27)"/><ellipse cx="19.2218" cy="19.2218" rx="6.500" ry="11" fill="#f0604a" fill-opacity="0.78" transform="rotate(315 19.2218 19.2218)"/></svg><svg class="b" style="left:727.8px;top:1160px;" width="54" height="54" viewBox="0 0 54 54"><defs><linearGradient id="apg" x1="0" y1="0" x2="0" y2="1"><stop offset="0" stop-color="#1fa8f8"/><stop offset="1" stop-color="#1a6fe8"/></linearGradient></defs><rect x="0" y="0" width="54" height="54" rx="12" fill="url(#apg)" /><path d="M28.500 11 L14 40 M25.500 11 L40 40 M8 33 H46" stroke="#fff" stroke-width="3.600" stroke-linecap="round" fill="none"/></svg><svg class="b" style="left:798.8px;top:1160px;" width="54" height="54" viewBox="0 0 54 54"><rect x="0" y="0" width="54" height="54" rx="12" fill="#a6abb2" /><circle cx="27" cy="27" r="22" fill="#4a4d52"/><circle cx="27" cy="27" r="21" fill="none" stroke="#8a8e94" stroke-width="3.500" stroke-dasharray="2 1.800"/><circle cx="27" cy="27" r="15" fill="#7c8086" stroke="#3a3c40" stroke-width="2.500"/><circle cx="27" cy="27" r="4" fill="#3a3c40"/><path d="M27 27 V12 M27 27 L14 34.500 M27 27 L40 34.500" stroke="#3a3c40" stroke-width="2.500"/></svg><svg class="b" style="left:870.7px;top:1160px;" width="54" height="54" viewBox="0 0 54 54"><defs><linearGradient id="bkg" x1="0" y1="0" x2="0" y2="1"><stop offset="0" stop-color="#fb9a2a"/><stop offset="1" stop-color="#f5761a"/></linearGradient></defs><rect x="0" y="0" width="54" height="54" rx="12" fill="url(#bkg)" /><path d="M27 18 C22 13.500 14 13.500 9 16 V38 C14 35.500 22 36 27 40 C32 36 40 35.500 45 38 V16 C40 13.500 32 13.500 27 18Z" fill="#fdf6ee"/><path d="M27 18 V40" stroke="#f5892a" stroke-width="1.500"/></svg><svg class="b" style="left:942.6px;top:1160px;" width="54" height="54" viewBox="0 0 54 54"><rect x="0" y="0" width="54" height="54" rx="12" fill="#fdfdfd" /><path d="M8 16 H17 L22 32 L27 19 L32 32 L36 22 H30 L33 16 H46 L37 40 H28 L27 36 L25 40 H17Z" fill="#f0302a"/><path d="M36 22 L46 16 L37 40Z" fill="#f5792a"/></svg><svg class="b" style="left:1013.6px;top:1158px;" width="56" height="56" viewBox="0 0 54 54"><ellipse cx="27" cy="51" rx="17" ry="3" fill="#e8a020"/><path d="M27 1 C17 1 13 10 14 19 C9 27 3 38 6 45 C8 46 11 41 13 38 C14 44 17 49 27 49 C37 49 40 44 41 38 C43 41 46 46 48 45 C51 38 45 27 40 19 C41 10 37 1 27 1Z" fill="#111"/><ellipse cx="27" cy="37" rx="11" ry="11.500" fill="#fff"/><ellipse cx="22" cy="12.500" rx="3" ry="4.200" fill="#fff"/><ellipse cx="32" cy="12.500" rx="3" ry="4.200" fill="#fff"/><circle cx="23" cy="13" r="1.300" fill="#111"/><path d="M30.500 13 H33.500" stroke="#111" stroke-width="1.300"/><ellipse cx="27" cy="21.500" rx="8" ry="2.800" fill="#f5a81a"/><path d="M12 25 C20 31 34 31 42 25 L41 31 C33 36 21 36 13 31Z" fill="#e8252a"/><path d="M18 31 H24 V41 H18Z" fill="#e8252a"/></svg><svg class="b" style="left:1085.5px;top:1159px;" width="56" height="56" viewBox="0 0 54 54"><path d="M20 4 C9 4 2 11 2 19 C2 24 5 28 9 30.500 L7.500 36 L14 32.500 C16 33 18 33.500 20 33.500 C31 33.500 38 27 38 19 C38 11 31 4 20 4Z" fill="#3fcf5e"/><circle cx="14" cy="14" r="2.200" fill="#1f7a35"/><circle cx="26" cy="14" r="2.200" fill="#1f7a35"/><path d="M36 22 C27 22 20 27.500 20 34.500 C20 41.500 27 47 36 47 C38 47 39.500 46.800 41 46.300 L47 49.500 L45.500 44.500 C49.500 42 52 38.500 52 34.500 C52 27.500 45 22 36 22Z" fill="#eceeee"/><circle cx="31" cy="31" r="1.800" fill="#9a9c9c"/><circle cx="41" cy="31" r="1.800" fill="#9a9c9c"/></svg><div class="b" style="left:1165px;top:1158px;width:1px;height:62px;background:rgba(60,60,60,0.45);"></div><svg class="b" style="left:1186.8px;top:1156px;" width="58" height="58" viewBox="0 0 54 54"><rect x="0" y="0" width="54" height="54" rx="13" fill="#f5071e" /></svg><div class="t bold" style="left:1216px;top:1185px;font-size:24px;color:#fff;transform:translate(-50%,-50%);font-weight:700;letter-spacing:-1px;">有道</div><svg class="b" style="left:1260.5px;top:1160px;" width="54" height="54" viewBox="0 0 54 54"><rect x="0" y="0" width="54" height="54" rx="13" fill="#e0061e" /><path d="M31 11 C27 10 24.500 13.500 26.500 17.500 L30 29 C31 33 27 35.500 24 33.500 C21 31.500 21.500 27 25 25.500 C31 23 37 27 37 33 C37 39.500 31.500 43 26 43 C19 43 14 37.500 14 31 C14 25.500 17.500 21 22.500 19.500" stroke="#fff" stroke-width="3.200" fill="none" stroke-linecap="round"/></svg><svg class="b" style="left:1329.8px;top:1154px;" width="60" height="60" viewBox="0 0 54 54"><path d="M27 0 L50 11 V40 L34 47.500 L34 54 L26 48 L4 40 V11Z" fill="#14284a"/><circle cx="20" cy="19" r="3.600" fill="#fff"/><circle cx="36" cy="27" r="3.600" fill="#fff"/><circle cx="20" cy="36" r="3.600" fill="#fff"/><path d="M20 19 L36 27 L20 36" stroke="#fff" stroke-width="2.200" fill="none"/></svg><svg class="b" style="left:1401.5px;top:1154px;" width="60" height="60" viewBox="0 0 54 54"><defs><linearGradient id="stg" x1="0" y1="0" x2="0" y2="1"><stop offset="0" stop-color="#0e1c4a"/><stop offset="0.55" stop-color="#1a4a8a"/><stop offset="1" stop-color="#2a9ad8"/></linearGradient><clipPath id="stc"><circle cx="27" cy="27" r="27"/></clipPath></defs><circle cx="27" cy="27" r="27" fill="url(#stg)"/><g clip-path="url(#stc)"><path d="M-2 22 L20 33 L33 22" stroke="#e8edf2" stroke-width="9" fill="none" stroke-linejoin="round"/><circle cx="36" cy="19" r="9.500" fill="#e8edf2"/><circle cx="36" cy="19" r="5.500" fill="#8a97b8" stroke="#1a2a5a" stroke-width="1.500"/><circle cx="19" cy="37" r="7.500" fill="#e8edf2"/><circle cx="19" cy="37" r="4.500" fill="none" stroke="#1a3a7a" stroke-width="1.800"/></g></svg><svg class="b" style="left:1474px;top:1157px;" width="58" height="58" viewBox="0 0 54 54"><rect x="0" y="0" width="54" height="54" rx="16" fill="#3d8bf7" /><rect x="10" y="17" width="23" height="20" rx="4.5" fill="#fff" /><path d="M35 24 L44 17.500 V36.500 L35 30Z" fill="#fff"/></svg><div class="b" style="left:1555px;top:1158px;width:1px;height:62px;background:rgba(60,60,60,0.45);"></div><svg class="b" style="left:1582px;top:1154px;" width="46" height="64" viewBox="0 0 46 64"><path d="M3 8 C3 3 43 3 43 8 L38 58 C37 62 9 62 8 58Z" fill="#e6e9e8" fill-opacity="0.82" stroke="#f4f6f5" stroke-width="1.200"/><ellipse cx="23" cy="8" rx="20" ry="5" fill="#aeb6b2"/><path d="M8 6 L14 2 L20 8 L27 1 L33 7 L39 3 L40 9 L8 10Z" fill="#f2f4f3"/><path d="M12 5 L18 9 M25 3 L30 9 M34 4 L37 9" stroke="#4a6a5a" stroke-width="1.500"/></svg><svg class="b" style="left:107.5px;top:1225px;" width="4" height="4" viewBox="0 0 4 4"><circle cx="2" cy="2" r="1.600" fill="#1e1e1e"/></svg><svg class="b" style="left:322.3px;top:1225px;" width="4" height="4" viewBox="0 0 4 4"><circle cx="2" cy="2" r="1.600" fill="#1e1e1e"/></svg><svg class="b" style="left:538px;top:1225px;" width="4" height="4" viewBox="0 0 4 4"><circle cx="2" cy="2" r="1.600" fill="#1e1e1e"/></svg><svg class="b" style="left:967.6px;top:1225px;" width="4" height="4" viewBox="0 0 4 4"><circle cx="2" cy="2" r="1.600" fill="#1e1e1e"/></svg><svg class="b" style="left:1039.6px;top:1225px;" width="4" height="4" viewBox="0 0 4 4"><circle cx="2" cy="2" r="1.600" fill="#1e1e1e"/></svg><svg class="b" style="left:1111.5px;top:1225px;" width="4" height="4" viewBox="0 0 4 4"><circle cx="2" cy="2" r="1.600" fill="#1e1e1e"/></svg><svg class="b" style="left:1213.8px;top:1225px;" width="4" height="4" viewBox="0 0 4 4"><circle cx="2" cy="2" r="1.600" fill="#1e1e1e"/></svg><svg class="b" style="left:1285.5px;top:1225px;" width="4" height="4" viewBox="0 0 4 4"><circle cx="2" cy="2" r="1.600" fill="#1e1e1e"/></svg><svg class="b" style="left:1357.8px;top:1225px;" width="4" height="4" viewBox="0 0 4 4"><circle cx="2" cy="2" r="1.600" fill="#1e1e1e"/></svg><svg class="b" style="left:1429.5px;top:1225px;" width="4" height="4" viewBox="0 0 4 4"><circle cx="2" cy="2" r="1.600" fill="#1e1e1e"/></svg><svg class="b" style="left:1501px;top:1225px;" width="4" height="4" viewBox="0 0 4 4"><circle cx="2" cy="2" r="1.600" fill="#1e1e1e"/></svg><div class="b" style="left:9px;top:1115px;width:1698px;height:31px;background:linear-gradient(#f7f7fa,#efeff3);border-radius:0 0 10px 10px;"></div><div class="t " style="left:20px;top:1131.5px;font-size:14.3px;color:#666b75;transform:translate(0,-50%);letter-spacing:0.336px;word-spacing:1px;">幻灯片 1 / 15</div><div class="t " style="left:148px;top:1131.5px;font-size:14.3px;color:#666b75;transform:translate(0,-50%);letter-spacing:0.334px;">Office 主题</div><svg class="b" style="left:239px;top:1121px;" width="20" height="22" viewBox="0 0 20 22"><g fill="none" stroke="#777c86" stroke-width="1.2" stroke-linecap="round" stroke-linejoin="round"><path d="M10 1.500 L17.500 4.500 V11 C17.500 15.500 14 18.500 10 20 C6 18.500 2.500 15.500 2.500 11 V4.500Z"/><path d="M7 7.500 L13 13.500 M13 7.500 L7 13.500"/></g></svg><div class="t " style="left:263px;top:1131.5px;font-size:14.1px;color:#666b75;transform:translate(0,-50%);">文档未保护</div><svg class="b" style="left:347px;top:1123px;" width="18" height="18" viewBox="0 0 18 18"><circle cx="9" cy="9" r="7.500" fill="#7db655"/><circle cx="9" cy="9" r="3" fill="#eef6e6"/></svg><div class="t " style="left:370px;top:1131.5px;font-size:14.1px;color:#666b75;transform:translate(0,-50%);">本地备份开</div><svg class="b" style="left:807px;top:1121px;" width="22" height="22" viewBox="0 0 22 22"><g fill="none" stroke="#555a64" stroke-width="1.3" stroke-linecap="round" stroke-linejoin="round"><path d="M3 6.500 L11 2.500 L19 6.500 V14 M3 6.500 V16 L11 20 L15 18 M3 6.500 L11 11 L19 6.500"/></g></svg><div class="t " style="left:835px;top:1131.5px;font-size:14.8px;color:#666b75;transform:translate(0,-50%);">一键美化</div><svg class="b" style="left:900px;top:1129px;" width="8" height="6" viewBox="0 0 8 6"><path d="M0.500 5 H7.500 L4 0.500Z" fill="#555a64"/></svg><svg class="b" style="left:1146px;top:1121px;" width="22" height="20" viewBox="0 0 22 20"><g fill="none" stroke="#4a4f59" stroke-width="1.4" stroke-linecap="round" stroke-linejoin="round"><path d="M2 8 H12 M2 13 H19 M2 18 H19 M14 4 L16.500 6.500 L19 4"/></g></svg><div class="b" style="left:1176px;top:1116px;width:30px;height:30px;background:#e4e6ea;"></div><svg class="b" style="left:1181px;top:1121px;" width="20" height="20" viewBox="0 0 20 20"><g fill="none" stroke="#4a4f59" stroke-width="1.4" stroke-linecap="round" stroke-linejoin="round"><rect x="1.500" y="2" width="17" height="16"/><path d="M6.500 2 V18 M6.500 10.500 H18.500"/></g></svg><svg class="b" style="left:1217px;top:1121px;" width="20" height="20" viewBox="0 0 20 20"><g fill="none" stroke="#4a4f59" stroke-width="1.4" stroke-linecap="round" stroke-linejoin="round"><rect x="2" y="2" width="6" height="6"/><rect x="12" y="2" width="6" height="6"/><rect x="2" y="12" width="6" height="6"/><rect x="12" y="12" width="6" height="6"/></g></svg><svg class="b" style="left:1252px;top:1121px;" width="22" height="20" viewBox="0 0 22 20"><g fill="none" stroke="#4a4f59" stroke-width="1.4" stroke-linecap="round" stroke-linejoin="round"><path d="M1.500 3 H10.500 V17 H1.500Z M10.500 3 H19.500 V17 H12.500 L10.500 19 V17"/></g></svg><svg class="b" style="left:1287px;top:1120px;" width="24" height="22" viewBox="0 0 24 22"><g fill="none" stroke="#4a4f59" stroke-width="1.4" stroke-linecap="round" stroke-linejoin="round"><rect x="2" y="7.500" width="14" height="11.500" rx="2"/><path d="M16 11.500 L21 9 V17.500 L16 15"/><path d="M6 7.500 V3.500 H12 C15 3.500 15 7 12 7"/></g></svg><svg class="b" style="left:1323px;top:1120px;" width="22" height="22" viewBox="0 0 22 22"><circle cx="11" cy="11" r="10" fill="#e9791d"/><path d="M8.500 6 L16 11 L8.500 16Z" fill="#fff"/></svg><div class="b" style="left:1367px;top:1129.5px;width:14px;height:2px;background:#4a4f59;"></div><div class="b" style="left:1390px;top:1129.7px;width:151px;height:1.8px;background:#4a5468;"></div><svg class="b" style="left:1458px;top:1121px;" width="20" height="20" viewBox="0 0 20 20"><circle cx="10" cy="10" r="7.500" fill="#f4f4f7" stroke="#6a6f79" stroke-width="1.300"/></svg><svg class="b" style="left:1549px;top:1122px;" width="16" height="16" viewBox="0 0 16 16"><path d="M8 1 V15 M1 8 H15" stroke="#4a4f59" stroke-width="2"/></svg><div class="t " style="left:1595px;top:1131.5px;font-size:14.5px;color:#7a7f89;transform:translate(0,-50%);letter-spacing:1.008px;">111 %</div><svg class="b" style="left:1665px;top:1121px;" width="20" height="20" viewBox="0 0 20 20"><g fill="none" stroke="#4a4f59" stroke-width="1.5" stroke-linecap="round" stroke-linejoin="round"><path d="M2 6 V2 H6 M14 2 H18 V6 M18 14 V18 H14 M6 18 H2 V14"/><rect x="6" y="6" width="8" height="8"/></g></svg></div><div class="b" style="left:1713.5px;top:688px;width:1.5px;height:38.5px;background:#d8d8d8;"></div><div class="b" style="left:1718px;top:688px;width:1.5px;height:38.5px;background:#d8d8d8;"></div><div class="b" style="left:1817px;top:201px;width:252px;height:147px;background:linear-gradient(180deg,#dcee80 0%,#cde968 12%,#a6e33a 35%,#7fdc14 52%,#63c418 53%,#7acc28 64%,#c8e862 84%,#f3f78e 100%);"></div><svg class="b" style="left:1823px;top:207px;" width="240" height="135" viewBox="0 0 240 135"><defs><filter id="bl1" x="-5%" y="-5%" width="110%" height="110%"><feGaussianBlur stdDeviation="0.9"/></filter><clipPath id="pc1"><rect width="240" height="135"/></clipPath><linearGradient id="cur" x1="0" y1="0" x2="1" y2="0"><stop offset="0" stop-color="#e9ece0"/><stop offset="0.35" stop-color="#f0e6dc"/><stop offset="0.6" stop-color="#fbf4f0"/><stop offset="1" stop-color="#ffffff"/></linearGradient><linearGradient id="wal" x1="0" y1="0" x2="0" y2="1"><stop offset="0" stop-color="#7c8078"/><stop offset="0.25" stop-color="#a3aaa8"/><stop offset="0.55" stop-color="#c2cacd"/><stop offset="1" stop-color="#c6ced2"/></linearGradient><linearGradient id="wds" x1="0" y1="0" x2="0" y2="1"><stop offset="0" stop-color="#76583a"/><stop offset="0.6" stop-color="#a07c4e"/><stop offset="1" stop-color="#b8905c"/></linearGradient><linearGradient id="skn" x1="0" y1="0" x2="1" y2="0"><stop offset="0" stop-color="#9a6a5c"/><stop offset="0.45" stop-color="#b27e6e"/><stop offset="1" stop-color="#cf9a86"/></linearGradient></defs><g clip-path="url(#pc1)"><g filter="url(#bl1)"><rect x="-5" y="-5" width="80" height="100" fill="url(#wal)"/><rect x="-5" y="-5" width="15" height="95" fill="url(#wds)"/><polygon points="15,11 68,6.500 68,53 13,55" fill="#c9ad86"/><polygon points="18,13.500 66.500,9.500 66.500,50.500 16.500,52" fill="#4e2a1e"/><polygon points="27,22 60,18 58,40 25,42.500" fill="#d6c6a6"/><path d="M29 37 C36 40 46 39.500 52 36 L50 34.500 H32Z M41 23 V35 M36 25 H47 V32 H36Z" stroke="#3a2c22" stroke-width="1" fill="#4a3a2c" fill-opacity="0.8"/><rect x="29" y="22.500" width="3" height="3.500" fill="#4a3020"/><rect x="50" y="20" width="7" height="2.200" fill="#a08030"/><rect x="67" y="-5" width="99" height="145" fill="#c69a64"/><rect x="74" y="-2" width="88" height="15" fill="#8a7a66"/><rect x="75" y="-2" width="5" height="15.500" fill="#eeeae0"/><rect x="81" y="-2" width="5" height="15.500" fill="#c8a87c"/><rect x="86" y="-2" width="3" height="15.500" fill="#e0d8c8"/><rect x="89" y="-2" width="4" height="15.500" fill="#7a5a48"/><rect x="93" y="-2" width="4" height="15.500" fill="#4a342e"/><rect x="97" y="-2" width="3" height="15.500" fill="#2e2224"/><rect x="100" y="-2" width="4" height="15.500" fill="#7a2630"/><rect x="104" y="-2" width="5" height="15.500" fill="#e6e0d6"/><rect x="109" y="-2" width="22" height="15.500" fill="#4590b8"/><rect x="131" y="-2" width="10" height="15.500" fill="#2a2a30"/><rect x="141" y="-2" width="5" height="15.500" fill="#d8d4cc"/><rect x="146" y="-2" width="8" height="15.500" fill="#3a6aa0"/><rect x="154" y="-2" width="6" height="15.500" fill="#7a2a34"/><polygon points="67,17 166,11 166,21 67,28" fill="#d3a66a"/><polygon points="67,28 166,21 166,24 67,31" fill="#9a6e42"/><rect x="98" y="24" width="66" height="21" fill="#a47a48"/><rect x="101" y="27" width="4.200" height="17" fill="#b8884e"/><rect x="105.2" y="27" width="4.200" height="17" fill="#b08048"/><rect x="109.4" y="27" width="4.200" height="17" fill="#c89a60"/><rect x="113.6" y="27" width="4.200" height="17" fill="#a87840"/><rect x="117.8" y="27" width="4.200" height="17" fill="#b8884e"/><rect x="122" y="27" width="4.200" height="17" fill="#e8e2d6"/><rect x="126.2" y="27" width="4.200" height="17" fill="#c89a60"/><rect x="130.4" y="27" width="4.200" height="17" fill="#a87840"/><rect x="134.6" y="27" width="4.200" height="17" fill="#b8884e"/><rect x="138.8" y="27" width="4.200" height="17" fill="#b08048"/><rect x="143" y="27" width="4.200" height="17" fill="#c89a60"/><rect x="147.2" y="27" width="4.200" height="17" fill="#a87840"/><rect x="151.4" y="27" width="4.200" height="17" fill="#e8e2d6"/><rect x="155.6" y="27" width="4.200" height="17" fill="#b08048"/><rect x="159.8" y="27" width="4.200" height="17" fill="#c89a60"/><rect x="67" y="44" width="99" height="6.500" fill="#c8985c"/><rect x="67" y="50.500" width="99" height="6" fill="#7c5636"/><rect x="72" y="56" width="92" height="33" fill="#a88252"/><rect x="88" y="65" width="3.800" height="23" fill="#e8e4e0" transform="skewX(14)"/><rect x="91.9" y="65" width="3.800" height="23" fill="#2a2226" transform="skewX(14)"/><rect x="95.8" y="65" width="3.800" height="23" fill="#b83a44" transform="skewX(14)"/><rect x="99.7" y="65" width="3.800" height="23" fill="#d8d0c8" transform="skewX(14)"/><rect x="103.6" y="65" width="3.800" height="23" fill="#3a2a34" transform="skewX(14)"/><rect x="107.5" y="65" width="3.800" height="23" fill="#f0ece8" transform="skewX(14)"/><rect x="111.4" y="65" width="3.800" height="23" fill="#5a3a5a" transform="skewX(14)"/><rect x="115.3" y="65" width="3.800" height="23" fill="#a83040" transform="skewX(14)"/><rect x="119.2" y="65" width="3.800" height="23" fill="#e8e4e0" transform="skewX(14)"/><rect x="123.1" y="65" width="3.800" height="23" fill="#2a2226" transform="skewX(14)"/><rect x="127" y="65" width="3.800" height="23" fill="#b83a44" transform="skewX(14)"/><rect x="130.9" y="65" width="3.800" height="23" fill="#d8d0c8" transform="skewX(14)"/><rect x="134.8" y="65" width="3.800" height="23" fill="#3a2a34" transform="skewX(14)"/><rect x="138.7" y="65" width="3.800" height="23" fill="#f0ece8" transform="skewX(14)"/><rect x="142.6" y="65" width="3.800" height="23" fill="#5a3a5a" transform="skewX(14)"/><rect x="66" y="88" width="100" height="5" fill="#d4aa76"/><rect x="72" y="93" width="92" height="45" fill="#9a7248"/><rect x="164" y="-5" width="32" height="145" fill="#e6e9dc"/><rect x="192" y="-5" width="53" height="145" fill="url(#cur)"/><path d="M196 10 L240 2" stroke="#c8a8a0" stroke-opacity="0.45" stroke-width="1"/><path d="M196 19 L240 11" stroke="#c8a8a0" stroke-opacity="0.45" stroke-width="1"/><path d="M196 28 L240 20" stroke="#c8a8a0" stroke-opacity="0.45" stroke-width="1"/><path d="M196 37 L240 29" stroke="#c8a8a0" stroke-opacity="0.45" stroke-width="1"/><path d="M196 46 L240 38" stroke="#c8a8a0" stroke-opacity="0.45" stroke-width="1"/><path d="M196 55 L240 47" stroke="#c8a8a0" stroke-opacity="0.45" stroke-width="1"/><path d="M196 64 L240 56" stroke="#c8a8a0" stroke-opacity="0.45" stroke-width="1"/><path d="M196 73 L240 65" stroke="#c8a8a0" stroke-opacity="0.45" stroke-width="1"/><path d="M196 82 L240 74" stroke="#c8a8a0" stroke-opacity="0.45" stroke-width="1"/><path d="M196 91 L240 83" stroke="#c8a8a0" stroke-opacity="0.45" stroke-width="1"/><path d="M196 100 L240 92" stroke="#c8a8a0" stroke-opacity="0.45" stroke-width="1"/><path d="M198 0 V100" stroke="#d8b8b0" stroke-opacity="0.35" stroke-width="1"/><path d="M203 0 V100" stroke="#d8b8b0" stroke-opacity="0.35" stroke-width="1"/><path d="M208 0 V100" stroke="#d8b8b0" stroke-opacity="0.35" stroke-width="1"/><path d="M213 0 V100" stroke="#d8b8b0" stroke-opacity="0.35" stroke-width="1"/><path d="M218 0 V100" stroke="#d8b8b0" stroke-opacity="0.35" stroke-width="1"/><path d="M223 0 V100" stroke="#d8b8b0" stroke-opacity="0.35" stroke-width="1"/><path d="M24 76 L32 57" stroke="#3a3a3e" stroke-width="1.800"/><path d="M22 80 L25 72" stroke="#d8d8d8" stroke-width="2.200"/><rect x="35" y="66" width="22" height="18" fill="#26262c"/><rect x="36" y="68" width="3.500" height="15" fill="#e8e8e8"/><rect x="44" y="72" width="3" height="11" fill="#e0e0e0"/><rect x="50" y="70" width="6" height="13" fill="#d0d0d0"/><rect x="3" y="74" width="28" height="11" fill="#c8b090"/><rect x="14" y="76" width="14" height="7" fill="#2a2018"/><rect x="6" y="78" width="6" height="4" fill="#c83a3a"/><path d="M-5 98 C10 82 40 76 60 78 L105 78 C130 84 140 100 148 140 L-5 140Z" fill="#c2cbe8"/><path d="M60 88 C70 100 95 100 104 84 L112 100 C100 118 78 128 74 140 H58 C66 120 60 100 60 88Z" fill="#8e98a2"/><ellipse cx="49" cy="64" rx="3.800" ry="8" fill="#96665a"/><ellipse cx="104" cy="60" rx="2.500" ry="6" fill="#c89a88"/><path d="M53 58 C52 38 64 28 78 28 C93 28 104 38 103 58 L101 80 C98 97 89 107 79 107 C69 107 60 97 57 80Z" fill="url(#skn)"/><ellipse cx="80" cy="45" rx="16" ry="8" fill="#c28e7c" fill-opacity="0.7"/><path d="M48.500 62 C42 32 58 18 78 19 C98 19.500 110 34 104.500 58 C103 46 98 36 92 32.500 C88 31 84 33 80 37 C76 39 71 37 68 32.500 C60 34 54 46 54 66Z" fill="#3a2826"/><path d="M57 80 C62 92 70 89 78 89 C86 89 94 92 100 78 C99 97 89 108 79 108 C68 108 59 98 57 80Z" fill="#6b4a40"/><path d="M67 88 C74 84 84 84 91 88 L88 93 C82 90 76 90 70 93Z" fill="#6b4a40"/><path d="M60 64 C64 61 71 61.500 75 65 M84 64 C88 60.500 95 60.500 99 63" stroke="#4a2e28" stroke-width="2.200" fill="none"/><path d="M63 70 C66 71.500 71 71.500 74 70 M86 69 C89 70.500 94 70.500 97 68.500" stroke="#3a2420" stroke-width="1.500" fill="none"/><path d="M79 66 L77 82 H85" stroke="#8e6254" stroke-width="1.600" fill="none"/><path d="M73 95 H85" stroke="#7a4a44" stroke-width="1.800"/><path d="M128 124 L160 108" stroke="#1a1a1e" stroke-width="3.500"/><ellipse cx="140" cy="132" rx="14" ry="9" fill="#a07860"/></g><rect x="0" y="106" width="143.500" height="29" fill="#46494c" fill-opacity="0.93"/></g></svg><div class="t " style="left:1829px;top:327.5px;font-size:17.5px;color:#fff;transform:translate(0,-50%);letter-spacing:0.565px;">Christian Keime</div><div class="b" style="left:1823px;top:351px;width:240px;height:134.6px;background:#222222;"></div><div class="t " style="left:1942.5px;top:418.7px;font-size:26.5px;color:#fff;transform:translate(-50%,-50%);font-weight:700;letter-spacing:-0.365px;">Jinhua HAO</div><div class="b" style="left:1823px;top:456.4px;width:27px;height:29.5px;background:#2e2e2e;"></div><svg class="b" style="left:1827px;top:459.4px;" width="22" height="25" viewBox="0 0 22 25"><rect x="6.600" y="2.800" width="7.800" height="14" rx="3.900" fill="#f0545a"/><path d="M10.500 16 V20 M6.500 20.800 H14.500" stroke="#f0545a" stroke-width="1.800"/><path d="M1.300 22 L20.700 1.500" stroke="#2e2e2e" stroke-width="4"/><path d="M1.300 22 L20.700 1.500" stroke="#f0545a" stroke-width="1.500"/></svg><svg class="b" style="left:1823px;top:495px;" width="240" height="135" viewBox="0 0 240 135"><defs><filter id="bl2" x="-5%" y="-5%" width="110%" height="110%"><feGaussianBlur stdDeviation="1.2"/></filter><clipPath id="pc2"><rect width="240" height="135"/></clipPath><linearGradient id="rw" x1="0" y1="0" x2="0" y2="1"><stop offset="0" stop-color="#e2dfd0"/><stop offset="1" stop-color="#c4c0ae"/></linearGradient></defs><g clip-path="url(#pc2)"><g filter="url(#bl2)"><rect x="-5" y="-5" width="250" height="145" fill="#8c877a"/><rect x="-5" y="-5" width="40" height="145" fill="#8b8c74"/><path d="M33 -5 H70 L88 24 V140 H18Z" fill="#281a22"/><path d="M66 -5 H72 L87 24 V118 H58 Z" fill="#56564f"/><path d="M78 10 V120" stroke="#3a3a38" stroke-width="1.500"/><rect x="71" y="70" width="5" height="12" fill="#1e1a1c"/><rect x="68" y="10" width="5" height="18" fill="#8a8a84" fill-opacity="0.6"/><path d="M75 -5 H172 V30 H88Z" fill="#8a8276"/><rect x="88" y="26" width="90" height="110" fill="#7a7468"/><rect x="140" y="27" width="34" height="110" fill="#33201c"/><path d="M171 -5 H186 L192 140 H176Z" fill="#3c241e"/><rect x="186" y="-5" width="59" height="145" fill="url(#rw)"/><rect x="188" y="55" width="22" height="85" fill="#5a4a40"/><rect x="206" y="26" width="30" height="110" fill="#d6d2c0"/><rect x="212" y="32" width="20" height="20" fill="#cbc6b2"/><rect x="212" y="56" width="20" height="76" fill="#cfcab8"/><path d="M186 0 C200 4 220 6 245 4 V14 C220 16 200 14 188 12Z" fill="#ebe8dc"/><path d="M56 140 C62 116 80 106 100 104 H150 C172 106 186 120 192 140Z" fill="#e6e4da"/><path d="M100 104 L128 138 L152 104" fill="#b89888"/><path d="M98 108 L118 138 M154 108 L138 138" stroke="#2a2426" stroke-width="4"/><path d="M100 42 C104 22 140 18 152 40 C162 58 168 84 168 98 C162 108 148 106 144 100 L108 100 C100 108 88 108 85 98 C88 80 94 58 100 42Z" fill="#2f2122"/><path d="M108 60 C110 42 124 37 134 40 C146 44 150 58 149 74 C148 94 138 106 127 106 C114 106 106 92 107 74Z" fill="#c9a292"/><ellipse cx="128" cy="56" rx="14" ry="9" fill="#d8b4a4" fill-opacity="0.8"/><path d="M100 46 C110 28 136 26 150 44 C140 38 127 38 118 46 C112 52 108 62 107 78 C102 66 98 56 100 46Z" fill="#2f2122"/><path d="M149 60 C152 74 150 90 146 100 L152 100 C156 86 156 70 152 56Z" fill="#2f2122"/><ellipse cx="117" cy="73.500" rx="9.500" ry="7.500" fill="#d8c0b8" fill-opacity="0.35" stroke="#ddd6ce" stroke-width="1.300"/><ellipse cx="140" cy="72.500" rx="9.500" ry="7.500" fill="#d8c0b8" fill-opacity="0.35" stroke="#ddd6ce" stroke-width="1.300"/><path d="M126.500 72 H130.500" stroke="#ddd6ce" stroke-width="1.200"/><path d="M111 69 C114 67.500 120 67.500 123 69.500 M134 68.500 C138 67 143 67 146 68.500" stroke="#4a3230" stroke-width="1.600" fill="none"/><path d="M126 80 C127 84 131 84 132 80" stroke="#b08878" stroke-width="1.400" fill="none"/><path d="M119 91 C125 99 135 98 139 90 C133 93 125 93 119 91Z" fill="#b8686a"/><path d="M122 92.500 C127 94 132 94 136 92" stroke="#f4ece8" stroke-width="1.600" fill="none"/></g><rect x="0" y="106" width="167.500" height="29" fill="#3c3e3e" fill-opacity="0.8"/></g></svg><div class="t " style="left:1829px;top:615.5px;font-size:17.5px;color:#fff;transform:translate(0,-50%);letter-spacing:0.643px;">Zhang Chutong-...</div><div class="b" style="left:1823px;top:639.3px;width:240px;height:134.5px;background:#222222;"></div><div class="t " style="left:1831.3px;top:706.6px;font-size:26.5px;color:#fff;transform:translate(0,-50%);font-weight:700;letter-spacing:-0.104px;">Ruan  Qianqian-...</div><div class="b" style="left:1823px;top:744.3px;width:27px;height:29.5px;background:#2e2e2e;"></div><svg class="b" style="left:1827px;top:747.3px;" width="22" height="25" viewBox="0 0 22 25"><rect x="6.600" y="2.800" width="7.800" height="14" rx="3.900" fill="#f0545a"/><path d="M10.500 16 V20 M6.500 20.800 H14.500" stroke="#f0545a" stroke-width="1.800"/><path d="M1.300 22 L20.700 1.500" stroke="#2e2e2e" stroke-width="4"/><path d="M1.300 22 L20.700 1.500" stroke="#f0545a" stroke-width="1.500"/></svg><div class="b" style="left:1823px;top:783.3px;width:240px;height:134.5px;background:#222222;"></div><div class="t " style="left:1832px;top:850.6px;font-size:26.5px;color:#fff;transform:translate(0,-50%);font-weight:700;letter-spacing:-0.249px;">Pang  HeTong-C...</div><div class="b" style="left:1823px;top:888.3px;width:27px;height:29.5px;background:#2e2e2e;"></div><svg class="b" style="left:1827px;top:891.3px;" width="22" height="25" viewBox="0 0 22 25"><rect x="6.600" y="2.800" width="7.800" height="14" rx="3.900" fill="#f0545a"/><path d="M10.500 16 V20 M6.500 20.800 H14.500" stroke="#f0545a" stroke-width="1.800"/><path d="M1.300 22 L20.700 1.500" stroke="#2e2e2e" stroke-width="4"/><path d="M1.300 22 L20.700 1.500" stroke="#f0545a" stroke-width="1.500"/></svg><div class="b" style="left:1823px;top:927.3px;width:240px;height:134.5px;background:#222222;"></div><div class="t " style="left:1831px;top:994.6px;font-size:26.5px;color:#fff;transform:translate(0,-50%);font-weight:700;letter-spacing:0.506px;">Mo  Yingqian-M...</div><div class="b" style="left:1823px;top:1032.3px;width:27px;height:29.5px;background:#2e2e2e;"></div><svg class="b" style="left:1827px;top:1035.3px;" width="22" height="25" viewBox="0 0 22 25"><rect x="6.600" y="2.800" width="7.800" height="14" rx="3.900" fill="#f0545a"/><path d="M10.500 16 V20 M6.500 20.800 H14.500" stroke="#f0545a" stroke-width="1.800"/><path d="M1.300 22 L20.700 1.500" stroke="#2e2e2e" stroke-width="4"/><path d="M1.300 22 L20.700 1.500" stroke="#f0545a" stroke-width="1.500"/></svg><div class="b" style="left:1823px;top:1071.3px;width:240px;height:134.5px;background:#222222;"></div><div class="t " style="left:1833.5px;top:1138.6px;font-size:26.5px;color:#fff;transform:translate(0,-50%);font-weight:700;letter-spacing:-0.106px;">Guo  Junqing-A...</div><div class="b" style="left:1823px;top:1176.3px;width:27px;height:29.5px;background:#2e2e2e;"></div><svg class="b" style="left:1827px;top:1179.3px;" width="22" height="25" viewBox="0 0 22 25"><rect x="6.600" y="2.800" width="7.800" height="14" rx="3.900" fill="#f0545a"/><path d="M10.500 16 V20 M6.500 20.800 H14.500" stroke="#f0545a" stroke-width="1.800"/><path d="M1.300 22 L20.700 1.500" stroke="#2e2e2e" stroke-width="4"/><path d="M1.300 22 L20.700 1.500" stroke="#f0545a" stroke-width="1.500"/></svg><div class="b" style="left:1887px;top:1215px;width:111px;height:51px;background:#111111;border-radius:8px;"></div><svg class="b" style="left:1931px;top:1234px;" width="22" height="12" viewBox="0 0 22 12"><path d="M1.500 1.500 L11 10 L20.500 1.500" stroke="#8a8aa2" stroke-width="2.800" fill="none"/></svg><svg class="b" style="left:50px;top:1306px;" width="40" height="40" viewBox="0 0 40 40"><rect x="13" y="3" width="12.500" height="22" rx="6.200" fill="#a8a8a8"/><path d="M9 18 C9 32 29 32 29 18" stroke="#a8a8a8" stroke-width="1.800" fill="none"/><path d="M19 29 V35 M12.500 35.500 H25.500" stroke="#a8a8a8" stroke-width="1.800"/><path d="M2.500 36.500 L36 3.500" stroke="#1a1a1a" stroke-width="5"/><path d="M2.500 36.500 L36 3.500" stroke="#f0545a" stroke-width="2"/></svg><svg class="b" style="left:111px;top:1321.5px;" width="12" height="8" viewBox="0 0 12 8"><path d="M1 7 L6 2 L11 7" stroke="#c8c8c8" stroke-width="2" fill="none"/></svg><div class="t " style="left:31px;top:1361px;font-size:19px;color:#d4d4d4;transform:translate(0,-50%);">解除静音</div><svg class="b" style="left:186px;top:1306px;" width="44" height="40" viewBox="0 0 44 40"><rect x="4" y="9.500" width="25.500" height="21" rx="4" fill="#a8a8a8"/><path d="M30.500 17 L40 11.500 V28.500 L30.500 23Z" fill="#a8a8a8"/><path d="M5 37 L39 3.500" stroke="#1a1a1a" stroke-width="5"/><path d="M5 37 L39 3.500" stroke="#f0545a" stroke-width="2"/></svg><svg class="b" style="left:258px;top:1321.5px;" width="12" height="8" viewBox="0 0 12 8"><path d="M1 7 L6 2 L11 7" stroke="#c8c8c8" stroke-width="2" fill="none"/></svg><div class="t " style="left:170px;top:1361px;font-size:19px;color:#d4d4d4;transform:translate(0,-50%);">开启视频</div><svg class="b" style="left:872px;top:1311px;" width="40" height="30" viewBox="0 0 40 30"><circle cx="12.500" cy="8.500" r="6.500" fill="#a8a8a8"/><path d="M1.500 28.500 C1.500 16 23.500 16 23.500 28.500Z" fill="#a8a8a8"/><circle cx="27.500" cy="10.500" r="5.500" fill="#a8a8a8"/><path d="M25.500 28.500 C26 22 24 20 22 18.500 C28 15.500 38 18 38 28.500Z" fill="#a8a8a8"/></svg><div class="t " style="left:917px;top:1325px;font-size:17px;color:#e0e0e0;transform:translate(0,-50%);">9</div><svg class="b" style="left:966px;top:1321.5px;" width="12" height="8" viewBox="0 0 12 8"><path d="M1 7 L6 2 L11 7" stroke="#c8c8c8" stroke-width="2" fill="none"/></svg><div class="t " style="left:865px;top:1361px;font-size:19px;color:#d4d4d4;transform:translate(0,-50%);">参会者</div><svg class="b" style="left:1034px;top:1311px;" width="32" height="30" viewBox="0 0 32 30"><path d="M5 1 H26 C29 1 31 3 31 6 V17 C31 20 29 22 26 22 H15 L7.500 28.500 V22 H5 C2 22 1 20 1 17 V6 C1 3 2 1 5 1Z" fill="#a8a8a8"/></svg><div class="t " style="left:1031px;top:1361px;font-size:19px;color:#d4d4d4;transform:translate(0,-50%);">聊天</div><div class="b" style="left:1165px;top:1312.5px;width:36px;height:27px;background:#23d959;border-radius:4px;"></div><svg class="b" style="left:1174px;top:1317px;" width="18" height="18" viewBox="0 0 18 18"><path d="M9 15.500 V4 M4 8.500 L9 3.500 L14 8.500" stroke="#1a1a1a" stroke-width="2.200" fill="none"/></svg><div class="t " style="left:1145px;top:1361px;font-size:19px;color:#23d959;transform:translate(0,-50%);">共享屏幕</div><svg class="b" style="left:1300px;top:1310px;" width="32" height="32" viewBox="0 0 32 32"><circle cx="16" cy="16" r="14" fill="none" stroke="#a8a8a8" stroke-width="2"/><circle cx="16" cy="16" r="10.500" fill="#a8a8a8"/></svg><div class="t " style="left:1298px;top:1361px;font-size:19px;color:#d4d4d4;transform:translate(0,-50%);">录制</div><svg class="b" style="left:1421px;top:1308px;" width="34" height="34" viewBox="0 0 34 34"><circle cx="14.500" cy="19" r="12.500" fill="#a8a8a8"/><circle cx="10" cy="16.500" r="1.800" fill="#1a1a1a"/><circle cx="19" cy="16.500" r="1.800" fill="#1a1a1a"/><path d="M8 21.500 C10 28 19 28 21 21.500Z" fill="#1a1a1a"/><circle cx="27" cy="6" r="6.500" fill="#1a1a1a"/><path d="M27 1.500 V10.500 M22.500 6 H31.500" stroke="#a8a8a8" stroke-width="1.800"/></svg><div class="t " style="left:1417px;top:1361px;font-size:19px;color:#d4d4d4;transform:translate(0,-50%);">表情</div><div class="b" style="left:2050px;top:1319px;width:92px;height:41px;background:#bb2629;border-radius:9px;"></div><div class="t semi" style="left:2096px;top:1339.5px;font-size:19.5px;color:#fff;transform:translate(-50%,-50%);">离开</div><div class="b" style="left:1899px;top:1251px;width:261px;height:32.7px;background:#ffffff;"></div><svg class="b" style="left:1902px;top:1253px;" width="5" height="30" viewBox="0 0 5 30"><rect x="0" y="0" width="1" height="1.500" fill="#9a9a9a"/><rect x="3" y="1.5" width="1" height="1.500" fill="#9a9a9a"/><rect x="0" y="3" width="1" height="1.500" fill="#9a9a9a"/><rect x="3" y="4.5" width="1" height="1.500" fill="#9a9a9a"/><rect x="0" y="6" width="1" height="1.500" fill="#9a9a9a"/><rect x="3" y="7.5" width="1" height="1.500" fill="#9a9a9a"/><rect x="0" y="9" width="1" height="1.500" fill="#9a9a9a"/><rect x="3" y="10.5" width="1" height="1.500" fill="#9a9a9a"/><rect x="0" y="12" width="1" height="1.500" fill="#9a9a9a"/><rect x="3" y="13.5" width="1" height="1.500" fill="#9a9a9a"/><rect x="0" y="15" width="1" height="1.500" fill="#9a9a9a"/><rect x="3" y="16.5" width="1" height="1.500" fill="#9a9a9a"/><rect x="0" y="18" width="1" height="1.500" fill="#9a9a9a"/><rect x="3" y="19.5" width="1" height="1.500" fill="#9a9a9a"/><rect x="0" y="21" width="1" height="1.500" fill="#9a9a9a"/><rect x="3" y="22.5" width="1" height="1.500" fill="#9a9a9a"/><rect x="0" y="24" width="1" height="1.500" fill="#9a9a9a"/><rect x="3" y="25.5" width="1" height="1.500" fill="#9a9a9a"/><rect x="0" y="27" width="1" height="1.500" fill="#9a9a9a"/><rect x="3" y="28.5" width="1" height="1.500" fill="#9a9a9a"/></svg><div class="t " style="left:1919px;top:1268px;font-size:16.5px;color:#222;transform:translate(0,-50%);font-family:'Liberation Mono',monospace;letter-spacing:-1.200px;">CH</div><div class="b" style="left:1950px;top:1255.5px;width:24px;height:24px;background:#fff;border:1px solid #8a8a8a;box-sizing:border-box;box-shadow:0 0 0 1px #fff inset,0 0 0 2px #b0b0b0 inset;"></div><div class="t " style="left:1962px;top:1268px;font-size:18px;color:#222;transform:translate(-50%,-50%);">拼</div><div class="t bold" style="left:1995px;top:1268.5px;font-size:23px;color:#000;transform:translate(-50%,-50%);">中</div><svg class="b" style="left:2015px;top:1256px;" width="22" height="24" viewBox="0 0 22 24"><path d="M12.500 1 C21.500 5.500 21 18 11.500 22.500 L5 22.500 L1.500 18.500 L7 17.500 C13 15.500 14.500 9 9 5.500Z" fill="#000"/><path d="M6 19.500 L9.500 21" stroke="#fff" stroke-width="1"/></svg><svg class="b" style="left:2044px;top:1257px;" width="24" height="24" viewBox="0 0 24 24"><circle cx="5.500" cy="6.500" r="2.600" fill="none" stroke="#000" stroke-width="2.800"/><path d="M13.500 10.500 H20 V14 C20 17.500 17 20.500 12.500 21.500 L11.500 19.500 C14 18.500 15.500 17 15.500 15 H13.500Z" fill="#000"/></svg><div class="t bold" style="left:2085px;top:1268px;font-size:24px;color:#000;transform:translate(-50%,-50%);">简</div><svg class="b" style="left:2102.5px;top:1255px;" width="26" height="26" viewBox="0 0 24 24"><circle cx="12" cy="12" r="8.500" fill="#000"/><circle cx="20.60" cy="12.00" r="2.900" fill="#000"/><circle cx="18.08" cy="18.08" r="2.900" fill="#000"/><circle cx="12.00" cy="20.60" r="2.900" fill="#000"/><circle cx="5.92" cy="18.08" r="2.900" fill="#000"/><circle cx="3.40" cy="12.00" r="2.900" fill="#000"/><circle cx="5.92" cy="5.92" r="2.900" fill="#000"/><circle cx="12.00" cy="3.40" r="2.900" fill="#000"/><circle cx="18.08" cy="5.92" r="2.900" fill="#000"/><circle cx="16.82" cy="13.95" r="1.150" fill="#fff"/><circle cx="14.03" cy="16.79" r="1.150" fill="#fff"/><circle cx="10.05" cy="16.82" r="1.150" fill="#fff"/><circle cx="7.21" cy="14.03" r="1.150" fill="#fff"/><circle cx="7.18" cy="10.05" r="1.150" fill="#fff"/><circle cx="9.97" cy="7.21" r="1.150" fill="#fff"/><circle cx="13.95" cy="7.18" r="1.150" fill="#fff"/><circle cx="16.79" cy="9.97" r="1.150" fill="#fff"/><circle cx="12" cy="12" r="2.600" fill="#fff"/><circle cx="12" cy="12" r="1.300" fill="#000"/></svg><svg class="b" style="left:2141px;top:1258px;" width="12" height="20" viewBox="0 0 12 20"><rect x="2" y="3.500" width="8" height="2.500" fill="#000"/><path d="M1.500 14.500 H10.500 L6 19Z" fill="#000"/></svg><div class="b" style="left:0px;top:1379.5px;width:2160px;height:3.5px;background:linear-gradient(90deg,#3a4a4a 0,#3a4a4a 72px,#ececec 72px,#ececec 588px,#1e3626 588px,#22382a 1655px,#7a8a80 1662px,#7a8a80 1752px,#56665c 1757px,#56665c 1850px,#22382a 1856px,#22382a 2148px,#c8d0c8 2150px,#22382a 2153px);"></div></body></html>
